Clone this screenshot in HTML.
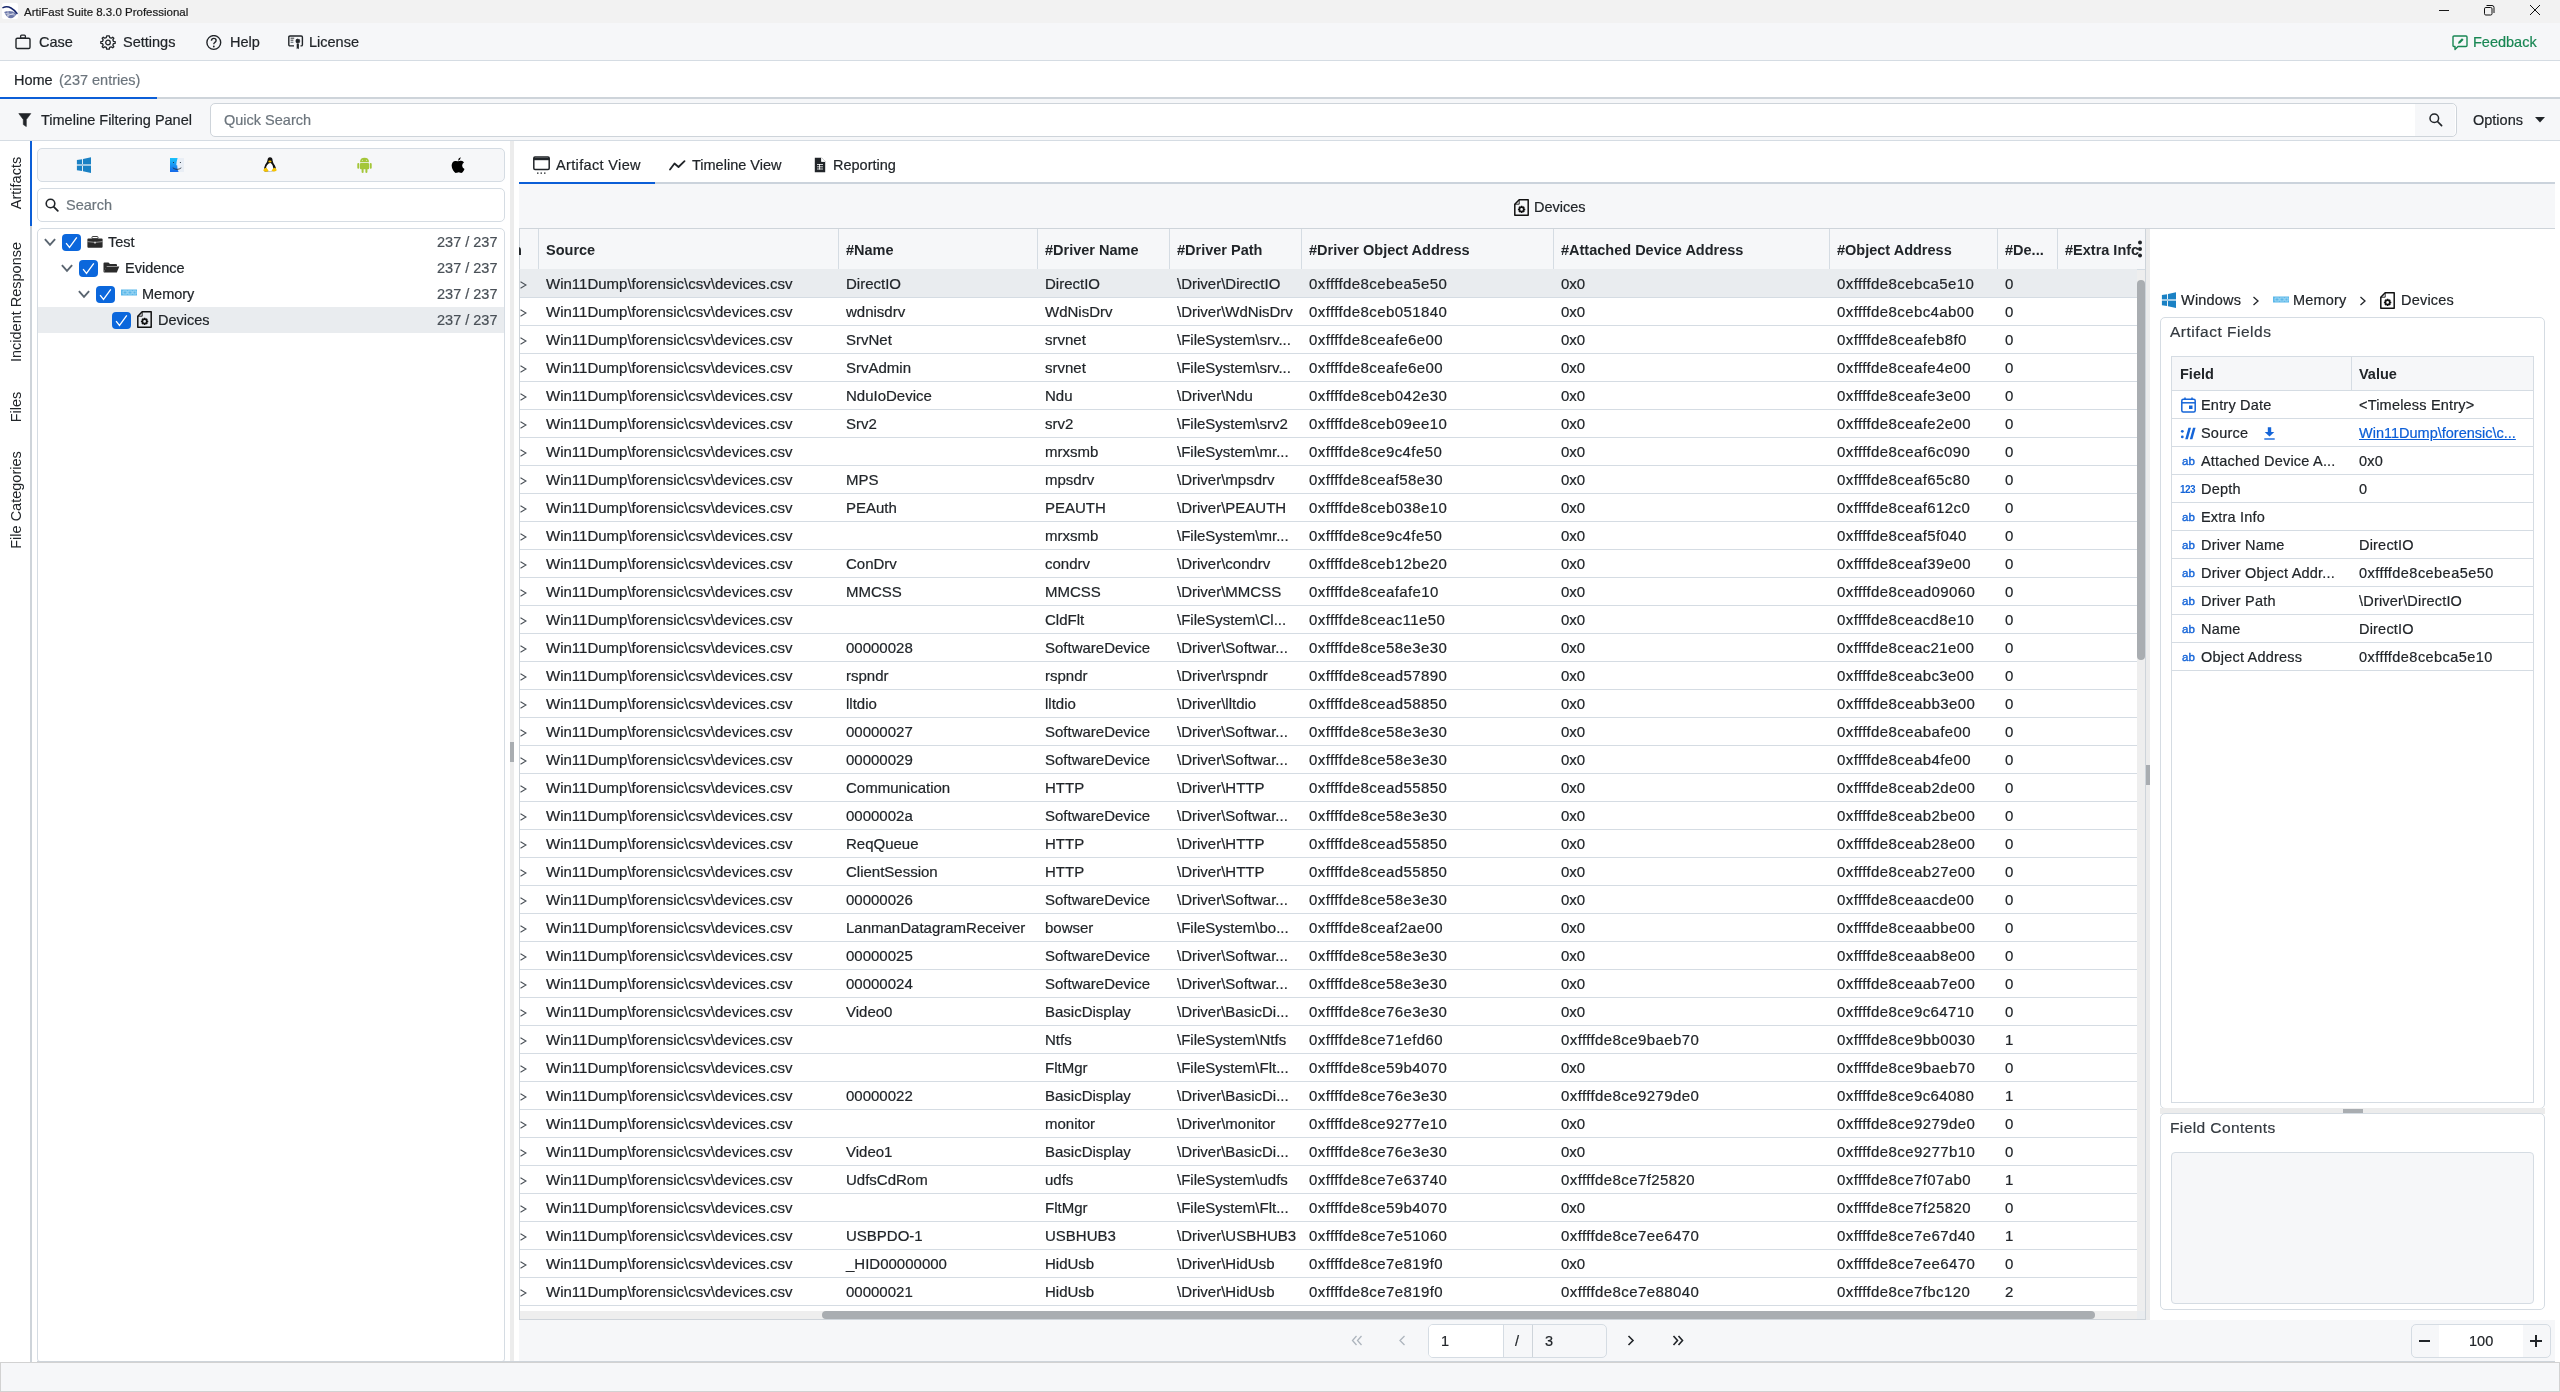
<!DOCTYPE html><html><head><meta charset="utf-8"><title>ArtiFast</title><style>
*{margin:0;padding:0}
html,body{width:2560px;height:1392px;overflow:hidden;background:#fff;font-family:"Liberation Sans",sans-serif;color:#212529}
#root{position:absolute;left:0;top:0;width:2560px;height:1392px;will-change:transform}
.r{position:absolute;display:block}
.t{position:absolute;white-space:pre;line-height:20px;-webkit-text-stroke:0.2px currentColor}
.clip{position:absolute;overflow:hidden}
.vt{position:absolute;white-space:pre;font-size:14.5px;line-height:20px;color:#212529;transform:translate(-50%,-50%) rotate(-90deg)}
</style></head><body><div id="root"><div class="r" style="left:0px;top:0px;width:2560px;height:23px;background:#f2f2f2"></div><svg class="r" style="left:2px;top:3px;" width="16" height="16" viewBox="0 0 16 16"><rect x="0" y="0" width="16" height="16" rx="2" fill="#fff"/><path d="M1 4.6 Q5 2.8 9 5 Q12.5 7 15 10.5" fill="none" stroke="#14246a" stroke-width="1.5" stroke-linecap="round"/><path d="M2.2 9 Q8 6.5 15 10.5 Q12 15 9 15.3 Q5 15.5 2.2 9 Z" fill="#3a4a8c" opacity="0.75"/><path d="M3.5 10.5 L13 12 M5 13 L12 10 M6 8 V14" stroke="#fff" stroke-width="0.7" opacity="0.8"/></svg><span class="t" style="left:24px;top:2.02px;font-size:11.5px;font-weight:400;color:#1a1a1a;">ArtiFast Suite 8.3.0 Professional</span><div class="r" style="left:2439px;top:10px;width:10px;height:1px;background:#1a1a1a"></div><svg class="r" style="left:2483px;top:4px;" width="12" height="12" viewBox="0 0 12 12"><rect x="1.5" y="3.5" width="7.5" height="7.5" rx="1.3" fill="none" stroke="#111" stroke-width="1"/><path d="M3.5 1.5 H9 Q11 1.5 11 3.5 V9" fill="none" stroke="#111" stroke-width="1"/></svg><svg class="r" style="left:2529px;top:4px;" width="12" height="12" viewBox="0 0 12 12"><path d="M1 1 L11 11 M11 1 L1 11" stroke="#111" stroke-width="1"/></svg><div class="r" style="left:0px;top:23px;width:2560px;height:37px;background:#f6f7f9"></div><div class="r" style="left:0px;top:60px;width:2560px;height:1px;background:#d5dce3"></div><svg class="r" style="left:15px;top:34px;" width="16" height="16" viewBox="0 0 16 16"><rect x="1" y="4.2" width="14" height="10.3" rx="1.3" fill="none" stroke="#212529" stroke-width="1.4"/><rect x="5.6" y="1.2" width="4.8" height="3" rx="1" fill="none" stroke="#212529" stroke-width="1.3"/></svg><span class="t" style="left:39px;top:31.98px;font-size:14.5px;font-weight:400;color:#212529;">Case</span><svg class="r" style="left:100px;top:35px;" width="16" height="15" viewBox="0 0 16 15"><path d="M8 0.8 L9.3 0.8 L9.7 2.6 L11.2 3.2 L12.7 2.2 L13.8 3.3 L12.8 4.8 L13.4 6.3 L15.2 6.7 L15.2 8.3 L13.4 8.7 L12.8 10.2 L13.8 11.7 L12.7 12.8 L11.2 11.8 L9.7 12.4 L9.3 14.2 L6.7 14.2 L6.3 12.4 L4.8 11.8 L3.3 12.8 L2.2 11.7 L3.2 10.2 L2.6 8.7 L0.8 8.3 L0.8 6.7 L2.6 6.3 L3.2 4.8 L2.2 3.3 L3.3 2.2 L4.8 3.2 L6.3 2.6 L6.7 0.8 Z" fill="none" stroke="#212529" stroke-width="1.3" stroke-linejoin="round"/><circle cx="8" cy="7.5" r="2.3" fill="none" stroke="#212529" stroke-width="1.3"/></svg><span class="t" style="left:123px;top:31.98px;font-size:14.5px;font-weight:400;color:#212529;">Settings</span><svg class="r" style="left:206px;top:35px;" width="16" height="16" viewBox="0 0 16 16"><circle cx="7.8" cy="7.5" r="6.9" fill="none" stroke="#212529" stroke-width="1.4"/><path d="M5.4 5.8 Q5.5 3.4 7.8 3.4 Q10.1 3.4 10.1 5.5 Q10.1 6.8 8.7 7.5 Q7.8 8 7.8 9.3" fill="none" stroke="#212529" stroke-width="1.4"/><circle cx="7.8" cy="11.5" r="0.9" fill="#212529"/></svg><span class="t" style="left:230px;top:31.98px;font-size:14.5px;font-weight:400;color:#212529;">Help</span><svg class="r" style="left:288px;top:35px;" width="16" height="16" viewBox="0 0 16 16"><path d="M6 10.9 H2 Q0.8 10.9 0.8 9.7 V2.2 Q0.8 1 2 1 H13.2 Q14.4 1 14.4 2.2 V9.7 Q14.4 10.9 13.2 10.9 H12.5" fill="none" stroke="#212529" stroke-width="1.4"/><path d="M2.6 3.2 H6.2 M2.6 5.2 H5.4" stroke="#212529" stroke-width="0.9"/><path d="M2.6 7.3 H5.4" stroke="#6c757d" stroke-width="1.2"/><path d="M9.8 3.2 L10.5 4.2 L11.7 4.1 L11.6 5.3 L12.5 6 L11.6 6.7 L11.7 7.9 L10.5 7.8 L9.8 8.8 L9.1 7.8 L7.9 7.9 L8 6.7 L7.1 6 L8 5.3 L7.9 4.1 L9.1 4.2 Z" fill="#212529"/><path d="M8.7 8.6 V14.2 L9.8 13.2 L10.9 14.2 V8.6" fill="#212529"/></svg><span class="t" style="left:309px;top:31.98px;font-size:14.5px;font-weight:400;color:#212529;">License</span><svg class="r" style="left:2452px;top:35px;" width="16" height="16" viewBox="0 0 16 16"><path d="M2 1 H14 Q15 1 15 2 V10.5 Q15 11.5 14 11.5 H6 L3 14.5 V11.5 H2 Q1 11.5 1 10.5 V2 Q1 1 2 1 Z" fill="none" stroke="#198754" stroke-width="1.4" stroke-linejoin="round"/><path d="M6 8.7 L6.5 6.7 L10 3.2 L11.6 4.8 L8.1 8.3 Z" fill="#198754"/></svg><span class="t" style="left:2473px;top:31.98px;font-size:14.5px;font-weight:400;color:#198754;">Feedback</span><div class="r" style="left:0px;top:61px;width:2560px;height:36px;background:#fff"></div><span class="t" style="left:14px;top:69.98px;font-size:14.5px;font-weight:400;color:#212529;">Home</span><span class="t" style="left:59px;top:69.98px;font-size:14.5px;font-weight:400;color:#6c757d;">(237 entries)</span><div class="r" style="left:0px;top:97px;width:2560px;height:2px;background:#ced4da"></div><div class="r" style="left:0px;top:97px;width:157px;height:2px;background:#0b5ed7"></div><div class="r" style="left:0px;top:99px;width:2560px;height:41px;background:#f6f7f9"></div><div class="r" style="left:0px;top:140px;width:2560px;height:1px;background:#d5dce3"></div><svg class="r" style="left:18px;top:113px;" width="14" height="14" viewBox="0 0 14 14"><path d="M0.8 0.6 H12.8 L8.3 6.6 V13.6 L5.3 11.6 V6.6 Z" fill="#212529" stroke="#212529" stroke-width="0.6" stroke-linejoin="round"/></svg><span class="t" style="left:41px;top:109.98px;font-size:14.5px;font-weight:400;color:#212529;">Timeline Filtering Panel</span><div class="r" style="left:210px;top:103px;width:2247px;height:34px;background:#fff;border:1px solid #ced4da;border-radius:5px;box-sizing:border-box"></div><div class="r" style="left:2415px;top:104px;width:40px;height:32px;background:#f6f7f9;border-radius:0 4px 4px 0"></div><svg class="r" style="left:2429px;top:113px;" width="14" height="14" viewBox="0 0 14 14"><circle cx="5.3" cy="5.3" r="4.3" fill="none" stroke="#212529" stroke-width="1.5"/><path d="M8.5 8.5 L12.6 12.6" stroke="#212529" stroke-width="1.7" stroke-linecap="round"/></svg><span class="t" style="left:224px;top:109.98px;font-size:14.5px;font-weight:400;color:#6c757d;">Quick Search</span><span class="t" style="left:2473px;top:109.98px;font-size:14.5px;font-weight:400;color:#212529;">Options</span><svg class="r" style="left:2535px;top:117px;" width="10" height="6" viewBox="0 0 10 6"><path d="M0 0 H10 L5 5.5 Z" fill="#212529"/></svg><div class="r" style="left:0px;top:141px;width:30px;height:1220px;background:#fff"></div><div class="r" style="left:30px;top:141px;width:2px;height:1221px;background:#ced4da"></div><div class="r" style="left:30px;top:141px;width:2px;height:85px;background:#0b5ed7"></div><div class="vt" style="left:16px;top:183.1px">Artifacts</div><div class="vt" style="left:16px;top:301.65px">Incident Response</div><div class="vt" style="left:16px;top:406.5px">Files</div><div class="vt" style="left:16px;top:500.0px">File Categories</div><div class="r" style="left:32px;top:141px;width:478px;height:1220px;background:#fff"></div><div class="r" style="left:37px;top:148px;width:468px;height:34px;background:#f6f7f9;border:1px solid #d5dce3;border-radius:5px;box-sizing:border-box"></div><svg class="r" style="left:76px;top:157px;" width="16" height="16" viewBox="0 0 16 16"><path d="M0.9 3.1 L6.1 2.3 V7.1 H0.9 Z M7 2.1 L15 0.2 V7.1 H7 Z M0.9 8.9 H6.1 V14 L0.9 13.2 Z M7 8.9 H15 V15.9 L7 14.2 Z" fill="#1a81c4"/><rect x="0.9" y="7.1" width="14.1" height="1.8" fill="#1a81c4" opacity="0.45"/></svg><svg class="r" style="left:170px;top:158px;" width="14" height="14" viewBox="0 0 14 14"><defs><linearGradient id="fg" x1="0" y1="0" x2="0" y2="1"><stop offset="0" stop-color="#19c3fb"/><stop offset="1" stop-color="#1668e8"/></linearGradient></defs><rect x="0" y="0" width="14" height="14" fill="#e9eef5"/><path d="M0 0 H7.6 Q6.4 4 6.3 7.2 H7.2 Q7 10.5 8.6 14 H0 Z" fill="url(#fg)"/><path d="M2.8 9.8 Q7 13 11.3 9.8" fill="none" stroke="#1d2a3a" stroke-width="0.8"/><path d="M3.5 4 V5 M10.4 4 V5" stroke="#1d2a3a" stroke-width="0.9"/></svg><svg class="r" style="left:263px;top:157px;" width="14" height="16" viewBox="0 0 14 16"><path d="M7 0.3 Q9.5 0.4 9.6 3.4 Q9.8 5.6 11.9 8.4 Q13.6 11 12.8 14 L1.6 14.4 Q0.3 11 2.3 7.6 Q4.3 5.2 4.5 3.2 Q4.7 0.4 7 0.3 Z" fill="#111"/><path d="M4.2 8 Q6 5.6 8 6.2 Q9.8 7.5 10.2 10.5 Q10.4 13.6 8 14.2 L5 14.2 Q3 13.4 3.1 11 Q3.2 9.2 4.2 8 Z" fill="#fff"/><ellipse cx="6.9" cy="4.5" rx="1.6" ry="1" fill="#f4bd00"/><path d="M0.2 13.4 Q1.2 10.2 3.6 11 L5.6 13.8 Q3 15.8 0.2 13.4 Z M13.8 13.2 Q12.8 10.2 10.5 11 L8.6 13.8 Q11.2 15.6 13.8 13.2 Z" fill="#f7c400"/></svg><svg class="r" style="left:357px;top:157px;" width="15" height="16" viewBox="0 0 15 16"><path d="M3 5.2 Q3 0.8 7.5 0.8 Q12 0.8 12 5.2 Z" fill="#a4c639"/><rect x="3" y="6" width="9" height="6.2" rx="0.8" fill="#a4c639"/><rect x="0.3" y="6" width="2" height="5.8" rx="1" fill="#a4c639"/><rect x="12.7" y="6" width="2" height="5.8" rx="1" fill="#a4c639"/><rect x="4.6" y="11" width="2" height="5" rx="1" fill="#a4c639"/><rect x="8.4" y="11" width="2" height="5" rx="1" fill="#a4c639"/><circle cx="5.4" cy="3.2" r="0.55" fill="#e8f0d0"/><circle cx="9.6" cy="3.2" r="0.55" fill="#e8f0d0"/></svg><svg class="r" style="left:451px;top:157px;" width="14" height="16" viewBox="0 0 14 16"><path d="M7 4.3 Q8.5 3.6 10.2 3.8 Q12 4 13 5.5 Q11 6.8 11.2 9 Q11.4 11.2 13.5 12 Q12.8 14 11.6 15.2 Q10.6 16.2 9.5 15.8 Q8.2 15.2 7 15.4 Q5.6 15.8 4.6 16 Q3.4 15.6 2.2 13.6 Q0.2 10 0.8 7.5 Q1.5 4.4 4.2 4.1 Q5.5 4 7 4.3 Z M7.1 3.7 Q7 1.3 9.6 0.3 Q9.9 2.9 7.1 3.7 Z" fill="#000"/></svg><div class="r" style="left:37px;top:188px;width:468px;height:34px;background:#fff;border:1px solid #d5dce3;border-radius:5px;box-sizing:border-box"></div><svg class="r" style="left:45px;top:198px;" width="14" height="14" viewBox="0 0 14 14"><circle cx="5.5" cy="5.5" r="4.3" fill="none" stroke="#212529" stroke-width="1.6"/><path d="M8.6 8.6 L12.8 12.8" stroke="#212529" stroke-width="1.8" stroke-linecap="round"/></svg><span class="t" style="left:66px;top:194.98px;font-size:14.5px;font-weight:400;color:#6c757d;">Search</span><div class="r" style="left:37px;top:228px;width:468px;height:1134px;border:1px solid #d5dce3;border-radius:5px 5px 3px 3px;box-sizing:border-box"></div><div class="r" style="left:38px;top:307px;width:466px;height:26px;background:#e9ecef"></div><svg class="r" style="left:44px;top:238px;" width="12" height="9" viewBox="0 0 12 9"><path d="M0.9 1.2 L6 6.8 L11.1 1.2" fill="none" stroke="#5a6570" stroke-width="1.9"/></svg><svg class="r" style="left:62px;top:234px;" width="19" height="17" viewBox="0 0 19 17"><rect x="0" y="0" width="19" height="17" rx="4" fill="#0b67dc"/><path d="M4.1 9.2 L7.5 13.5 L14.8 3.4" fill="none" stroke="#fff" stroke-width="1.3"/></svg><svg class="r" style="left:87px;top:236px;" width="16" height="12" viewBox="0 0 16 12"><rect x="5" y="0.5" width="6" height="2.2" rx="0.8" fill="none" stroke="#2b2b2b" stroke-width="0.9"/><rect x="0.4" y="2.4" width="15.2" height="9.3" rx="1" fill="#2b2b2b"/><path d="M0.5 5.6 Q8 7.2 15.5 5.6" fill="none" stroke="#ddd" stroke-width="0.6"/><rect x="7" y="5.8" width="2" height="1.6" fill="#ccc"/></svg><span class="t" style="left:108px;top:231.98px;font-size:14.5px;font-weight:400;color:#212529;">Test</span><span class="t" style="left:437px;top:231.98px;font-size:14.5px;font-weight:400;color:#495057;">237 / 237</span><svg class="r" style="left:61px;top:264px;" width="12" height="9" viewBox="0 0 12 9"><path d="M0.9 1.2 L6 6.8 L11.1 1.2" fill="none" stroke="#5a6570" stroke-width="1.9"/></svg><svg class="r" style="left:79px;top:260px;" width="19" height="17" viewBox="0 0 19 17"><rect x="0" y="0" width="19" height="17" rx="4" fill="#0b67dc"/><path d="M4.1 9.2 L7.5 13.5 L14.8 3.4" fill="none" stroke="#fff" stroke-width="1.3"/></svg><svg class="r" style="left:103px;top:262px;" width="17" height="11" viewBox="0 0 17 11"><path d="M0.5 10.5 V1.5 Q0.5 0.5 1.5 0.5 H5.5 L7 2 H13 Q14 2 14 3 V4 H4 Z" fill="#2b2b2b"/><path d="M3.2 4.5 H16.3 L13.8 10.5 H0.8 Z" fill="#2b2b2b"/></svg><span class="t" style="left:125px;top:257.98px;font-size:14.5px;font-weight:400;color:#212529;">Evidence</span><span class="t" style="left:437px;top:257.98px;font-size:14.5px;font-weight:400;color:#495057;">237 / 237</span><svg class="r" style="left:78px;top:290px;" width="12" height="9" viewBox="0 0 12 9"><path d="M0.9 1.2 L6 6.8 L11.1 1.2" fill="none" stroke="#5a6570" stroke-width="1.9"/></svg><svg class="r" style="left:96px;top:286px;" width="19" height="17" viewBox="0 0 19 17"><rect x="0" y="0" width="19" height="17" rx="4" fill="#0b67dc"/><path d="M4.1 9.2 L7.5 13.5 L14.8 3.4" fill="none" stroke="#fff" stroke-width="1.3"/></svg><svg class="r" style="left:121px;top:289px;" width="16" height="7" viewBox="0 0 16 7"><rect x="0" y="0.5" width="16" height="6" fill="#5bb8ea"/><path d="M2 2 H6 V5 H2 Z M7 2 H11 V5 H7 Z M12 2 H15 V5 H12 Z" fill="none" stroke="#c8e8f8" stroke-width="0.6"/></svg><span class="t" style="left:142px;top:283.98px;font-size:14.5px;font-weight:400;color:#212529;">Memory</span><span class="t" style="left:437px;top:283.98px;font-size:14.5px;font-weight:400;color:#495057;">237 / 237</span><svg class="r" style="left:112px;top:312px;" width="19" height="17" viewBox="0 0 19 17"><rect x="0" y="0" width="19" height="17" rx="4" fill="#0b67dc"/><path d="M4.1 9.2 L7.5 13.5 L14.8 3.4" fill="none" stroke="#fff" stroke-width="1.3"/></svg><svg class="r" style="left:137px;top:311px;" width="15" height="17" viewBox="0 0 15 17"><path d="M5.2 0.8 H14.2 V16.2 H0.8 V5.2 Z" fill="none" stroke="#111" stroke-width="1.5" stroke-linejoin="round"/><path d="M5.2 0.8 V5.2 H0.8" fill="none" stroke="#111" stroke-width="0.9"/><circle cx="7.6" cy="10.4" r="2.2" fill="none" stroke="#111" stroke-width="1.7"/><path d="M10.00 10.40 L11.30 10.40 M9.30 12.10 L10.22 13.02 M7.60 12.80 L7.60 14.10 M5.90 12.10 L4.98 13.02 M5.20 10.40 L3.90 10.40 M5.90 8.70 L4.98 7.78 M7.60 8.00 L7.60 6.70 M9.30 8.70 L10.22 7.78" stroke="#111" stroke-width="1.5"/></svg><span class="t" style="left:158px;top:309.98px;font-size:14.5px;font-weight:400;color:#212529;">Devices</span><span class="t" style="left:437px;top:309.98px;font-size:14.5px;font-weight:400;color:#495057;">237 / 237</span><div class="r" style="left:510px;top:141px;width:4px;height:1221px;background:#ececec"></div><div class="r" style="left:510px;top:742px;width:4px;height:20px;background:#a9adb1"></div><div class="r" style="left:514px;top:141px;width:2046px;height:1179px;background:#fff"></div><div class="r" style="left:519px;top:182px;width:2036px;height:2px;background:#cbd3dc"></div><div class="r" style="left:519px;top:182px;width:136px;height:2px;background:#0b5ed7"></div><svg class="r" style="left:533px;top:156px;" width="17" height="18" viewBox="0 0 17 18"><rect x="0.8" y="1" width="15.4" height="12.5" rx="1.2" fill="none" stroke="#212529" stroke-width="1.5"/><path d="M0.8 3 H16.2" stroke="#212529" stroke-width="2.4"/><path d="M4 17.2 H5.5 M7.5 17.2 H9 M11 17.2 H12.5" stroke="#212529" stroke-width="1.3"/></svg><span class="t" style="left:556px;top:154.98px;font-size:14.5px;font-weight:400;color:#212529;letter-spacing:0.35px">Artifact View</span><svg class="r" style="left:669px;top:160px;" width="17" height="11" viewBox="0 0 17 11"><path d="M1 9.5 L5.5 3.5 L9.5 7 L15.5 1.2" fill="none" stroke="#212529" stroke-width="1.8" stroke-linejoin="round" stroke-linecap="round"/></svg><span class="t" style="left:692px;top:154.98px;font-size:14.5px;font-weight:400;color:#212529;">Timeline View</span><svg class="r" style="left:814px;top:157px;" width="12" height="16" viewBox="0 0 12 16"><path d="M0.8 0.8 H7.5 L11.2 4.5 V15.2 H0.8 Z" fill="#212529"/><path d="M7.5 0.8 V4.5 H11.2" fill="#fff" stroke="#fff" stroke-width="0.8"/><path d="M3 7.5 H9 M3 9.8 H9 M3 12 H9 M5.5 7 V12.5" stroke="#fff" stroke-width="0.8"/></svg><span class="t" style="left:833px;top:154.98px;font-size:14.5px;font-weight:400;color:#212529;">Reporting</span><div class="r" style="left:519px;top:184px;width:2036px;height:44px;background:#f6f7f9"></div><div class="r" style="left:519px;top:228px;width:2036px;height:1px;background:#ced4da"></div><svg class="r" style="left:1514px;top:199px;" width="15" height="17" viewBox="0 0 15 17"><path d="M5.2 0.8 H14.2 V16.2 H0.8 V5.2 Z" fill="none" stroke="#111" stroke-width="1.5" stroke-linejoin="round"/><path d="M5.2 0.8 V5.2 H0.8" fill="none" stroke="#111" stroke-width="0.9"/><circle cx="7.6" cy="10.4" r="2.2" fill="none" stroke="#111" stroke-width="1.7"/><path d="M10.00 10.40 L11.30 10.40 M9.30 12.10 L10.22 13.02 M7.60 12.80 L7.60 14.10 M5.90 12.10 L4.98 13.02 M5.20 10.40 L3.90 10.40 M5.90 8.70 L4.98 7.78 M7.60 8.00 L7.60 6.70 M9.30 8.70 L10.22 7.78" stroke="#111" stroke-width="1.5"/></svg><span class="t" style="left:1534px;top:196.98px;font-size:14.5px;font-weight:400;color:#212529;">Devices</span><div class="r" style="left:519px;top:229px;width:1626px;height:1091px;background:#fff"></div><div class="r" style="left:519px;top:229px;width:1626px;height:40px;background:#f6f7f9"></div><div class="r" style="left:519px;top:228px;width:1px;height:1092px;background:#ced4da"></div><div class="r" style="left:2145px;top:228px;width:1px;height:1092px;background:#ced4da"></div><div class="r" style="left:519px;top:269px;width:1626px;height:1px;background:#d5dce3"></div><div class="r" style="left:538px;top:229px;width:1px;height:40px;background:#d5dce3"></div><div class="r" style="left:838px;top:229px;width:1px;height:40px;background:#d5dce3"></div><div class="r" style="left:1037px;top:229px;width:1px;height:40px;background:#d5dce3"></div><div class="r" style="left:1169px;top:229px;width:1px;height:40px;background:#d5dce3"></div><div class="r" style="left:1301px;top:229px;width:1px;height:40px;background:#d5dce3"></div><div class="r" style="left:1553px;top:229px;width:1px;height:40px;background:#d5dce3"></div><div class="r" style="left:1829px;top:229px;width:1px;height:40px;background:#d5dce3"></div><div class="r" style="left:1997px;top:229px;width:1px;height:40px;background:#d5dce3"></div><div class="r" style="left:2057px;top:229px;width:1px;height:40px;background:#d5dce3"></div><div class="clip" style="left:519px;top:229px;width:19px;height:40px"><span class="t" style="left:-6px;top:10.98px;font-size:14.5px;font-weight:700;color:#212529;-webkit-text-stroke:0;">n</span></div><span class="t" style="left:546px;top:239.98px;font-size:14.5px;font-weight:700;color:#212529;-webkit-text-stroke:0;">Source</span><span class="t" style="left:846px;top:239.98px;font-size:14.5px;font-weight:700;color:#212529;-webkit-text-stroke:0;">#Name</span><span class="t" style="left:1045px;top:239.98px;font-size:14.5px;font-weight:700;color:#212529;-webkit-text-stroke:0;">#Driver Name</span><span class="t" style="left:1177px;top:239.98px;font-size:14.5px;font-weight:700;color:#212529;-webkit-text-stroke:0;">#Driver Path</span><span class="t" style="left:1309px;top:239.98px;font-size:14.5px;font-weight:700;color:#212529;-webkit-text-stroke:0;">#Driver Object Address</span><span class="t" style="left:1561px;top:239.98px;font-size:14.5px;font-weight:700;color:#212529;-webkit-text-stroke:0;">#Attached Device Address</span><span class="t" style="left:1837px;top:239.98px;font-size:14.5px;font-weight:700;color:#212529;-webkit-text-stroke:0;">#Object Address</span><span class="t" style="left:2005px;top:239.98px;font-size:14.5px;font-weight:700;color:#212529;-webkit-text-stroke:0;">#De...</span><span class="t" style="left:2065px;top:239.98px;font-size:14.5px;font-weight:700;color:#212529;-webkit-text-stroke:0;">#Extra Infc</span><svg class="r" style="left:2137px;top:240px;" width="6" height="18" viewBox="0 0 6 18"><circle cx="3" cy="2.5" r="2" fill="#212529"/><circle cx="3" cy="9" r="2" fill="#212529"/><circle cx="3" cy="15.5" r="2" fill="#212529"/></svg><div class="r" style="left:520px;top:269px;width:1617px;height:28px;background:#e9ecef"></div><div class="r" style="left:520px;top:297px;width:1617px;height:1px;background:#d5dce3"></div><svg class="r" style="left:520px;top:281px;" width="7" height="8" viewBox="0 0 7 8"><path d="M0.5 0.8 L6 4 L0.5 7.2" fill="none" stroke="#495057" stroke-width="1.1"/></svg><span class="t" style="left:546px;top:273.80px;font-size:15px;font-weight:400;color:#212529;">Win11Dump\forensic\csv\devices.csv</span><span class="t" style="left:846px;top:273.80px;font-size:15px;font-weight:400;color:#212529;">DirectIO</span><span class="t" style="left:1045px;top:273.80px;font-size:15px;font-weight:400;color:#212529;">DirectIO</span><span class="t" style="left:1177px;top:273.80px;font-size:15px;font-weight:400;color:#212529;">\Driver\DirectIO</span><span class="t" style="left:1309px;top:273.80px;font-size:15px;font-weight:400;color:#212529;letter-spacing:0.4px">0xffffde8cebea5e50</span><span class="t" style="left:1561px;top:273.80px;font-size:15px;font-weight:400;color:#212529;">0x0</span><span class="t" style="left:1837px;top:273.80px;font-size:15px;font-weight:400;color:#212529;letter-spacing:0.4px">0xffffde8cebca5e10</span><span class="t" style="left:2005px;top:273.80px;font-size:15px;font-weight:400;color:#212529;">0</span><div class="r" style="left:520px;top:325px;width:1617px;height:1px;background:#d5dce3"></div><svg class="r" style="left:520px;top:309px;" width="7" height="8" viewBox="0 0 7 8"><path d="M0.5 0.8 L6 4 L0.5 7.2" fill="none" stroke="#495057" stroke-width="1.1"/></svg><span class="t" style="left:546px;top:301.80px;font-size:15px;font-weight:400;color:#212529;">Win11Dump\forensic\csv\devices.csv</span><span class="t" style="left:846px;top:301.80px;font-size:15px;font-weight:400;color:#212529;">wdnisdrv</span><span class="t" style="left:1045px;top:301.80px;font-size:15px;font-weight:400;color:#212529;">WdNisDrv</span><span class="t" style="left:1177px;top:301.80px;font-size:15px;font-weight:400;color:#212529;">\Driver\WdNisDrv</span><span class="t" style="left:1309px;top:301.80px;font-size:15px;font-weight:400;color:#212529;letter-spacing:0.4px">0xffffde8ceb051840</span><span class="t" style="left:1561px;top:301.80px;font-size:15px;font-weight:400;color:#212529;">0x0</span><span class="t" style="left:1837px;top:301.80px;font-size:15px;font-weight:400;color:#212529;letter-spacing:0.4px">0xffffde8cebc4ab00</span><span class="t" style="left:2005px;top:301.80px;font-size:15px;font-weight:400;color:#212529;">0</span><div class="r" style="left:520px;top:353px;width:1617px;height:1px;background:#d5dce3"></div><svg class="r" style="left:520px;top:337px;" width="7" height="8" viewBox="0 0 7 8"><path d="M0.5 0.8 L6 4 L0.5 7.2" fill="none" stroke="#495057" stroke-width="1.1"/></svg><span class="t" style="left:546px;top:329.80px;font-size:15px;font-weight:400;color:#212529;">Win11Dump\forensic\csv\devices.csv</span><span class="t" style="left:846px;top:329.80px;font-size:15px;font-weight:400;color:#212529;">SrvNet</span><span class="t" style="left:1045px;top:329.80px;font-size:15px;font-weight:400;color:#212529;">srvnet</span><span class="t" style="left:1177px;top:329.80px;font-size:15px;font-weight:400;color:#212529;">\FileSystem\srv...</span><span class="t" style="left:1309px;top:329.80px;font-size:15px;font-weight:400;color:#212529;letter-spacing:0.4px">0xffffde8ceafe6e00</span><span class="t" style="left:1561px;top:329.80px;font-size:15px;font-weight:400;color:#212529;">0x0</span><span class="t" style="left:1837px;top:329.80px;font-size:15px;font-weight:400;color:#212529;letter-spacing:0.4px">0xffffde8ceafeb8f0</span><span class="t" style="left:2005px;top:329.80px;font-size:15px;font-weight:400;color:#212529;">0</span><div class="r" style="left:520px;top:381px;width:1617px;height:1px;background:#d5dce3"></div><svg class="r" style="left:520px;top:365px;" width="7" height="8" viewBox="0 0 7 8"><path d="M0.5 0.8 L6 4 L0.5 7.2" fill="none" stroke="#495057" stroke-width="1.1"/></svg><span class="t" style="left:546px;top:357.80px;font-size:15px;font-weight:400;color:#212529;">Win11Dump\forensic\csv\devices.csv</span><span class="t" style="left:846px;top:357.80px;font-size:15px;font-weight:400;color:#212529;">SrvAdmin</span><span class="t" style="left:1045px;top:357.80px;font-size:15px;font-weight:400;color:#212529;">srvnet</span><span class="t" style="left:1177px;top:357.80px;font-size:15px;font-weight:400;color:#212529;">\FileSystem\srv...</span><span class="t" style="left:1309px;top:357.80px;font-size:15px;font-weight:400;color:#212529;letter-spacing:0.4px">0xffffde8ceafe6e00</span><span class="t" style="left:1561px;top:357.80px;font-size:15px;font-weight:400;color:#212529;">0x0</span><span class="t" style="left:1837px;top:357.80px;font-size:15px;font-weight:400;color:#212529;letter-spacing:0.4px">0xffffde8ceafe4e00</span><span class="t" style="left:2005px;top:357.80px;font-size:15px;font-weight:400;color:#212529;">0</span><div class="r" style="left:520px;top:409px;width:1617px;height:1px;background:#d5dce3"></div><svg class="r" style="left:520px;top:393px;" width="7" height="8" viewBox="0 0 7 8"><path d="M0.5 0.8 L6 4 L0.5 7.2" fill="none" stroke="#495057" stroke-width="1.1"/></svg><span class="t" style="left:546px;top:385.80px;font-size:15px;font-weight:400;color:#212529;">Win11Dump\forensic\csv\devices.csv</span><span class="t" style="left:846px;top:385.80px;font-size:15px;font-weight:400;color:#212529;">NduIoDevice</span><span class="t" style="left:1045px;top:385.80px;font-size:15px;font-weight:400;color:#212529;">Ndu</span><span class="t" style="left:1177px;top:385.80px;font-size:15px;font-weight:400;color:#212529;">\Driver\Ndu</span><span class="t" style="left:1309px;top:385.80px;font-size:15px;font-weight:400;color:#212529;letter-spacing:0.4px">0xffffde8ceb042e30</span><span class="t" style="left:1561px;top:385.80px;font-size:15px;font-weight:400;color:#212529;">0x0</span><span class="t" style="left:1837px;top:385.80px;font-size:15px;font-weight:400;color:#212529;letter-spacing:0.4px">0xffffde8ceafe3e00</span><span class="t" style="left:2005px;top:385.80px;font-size:15px;font-weight:400;color:#212529;">0</span><div class="r" style="left:520px;top:437px;width:1617px;height:1px;background:#d5dce3"></div><svg class="r" style="left:520px;top:421px;" width="7" height="8" viewBox="0 0 7 8"><path d="M0.5 0.8 L6 4 L0.5 7.2" fill="none" stroke="#495057" stroke-width="1.1"/></svg><span class="t" style="left:546px;top:413.80px;font-size:15px;font-weight:400;color:#212529;">Win11Dump\forensic\csv\devices.csv</span><span class="t" style="left:846px;top:413.80px;font-size:15px;font-weight:400;color:#212529;">Srv2</span><span class="t" style="left:1045px;top:413.80px;font-size:15px;font-weight:400;color:#212529;">srv2</span><span class="t" style="left:1177px;top:413.80px;font-size:15px;font-weight:400;color:#212529;">\FileSystem\srv2</span><span class="t" style="left:1309px;top:413.80px;font-size:15px;font-weight:400;color:#212529;letter-spacing:0.4px">0xffffde8ceb09ee10</span><span class="t" style="left:1561px;top:413.80px;font-size:15px;font-weight:400;color:#212529;">0x0</span><span class="t" style="left:1837px;top:413.80px;font-size:15px;font-weight:400;color:#212529;letter-spacing:0.4px">0xffffde8ceafe2e00</span><span class="t" style="left:2005px;top:413.80px;font-size:15px;font-weight:400;color:#212529;">0</span><div class="r" style="left:520px;top:465px;width:1617px;height:1px;background:#d5dce3"></div><svg class="r" style="left:520px;top:449px;" width="7" height="8" viewBox="0 0 7 8"><path d="M0.5 0.8 L6 4 L0.5 7.2" fill="none" stroke="#495057" stroke-width="1.1"/></svg><span class="t" style="left:546px;top:441.80px;font-size:15px;font-weight:400;color:#212529;">Win11Dump\forensic\csv\devices.csv</span><span class="t" style="left:1045px;top:441.80px;font-size:15px;font-weight:400;color:#212529;">mrxsmb</span><span class="t" style="left:1177px;top:441.80px;font-size:15px;font-weight:400;color:#212529;">\FileSystem\mr...</span><span class="t" style="left:1309px;top:441.80px;font-size:15px;font-weight:400;color:#212529;letter-spacing:0.4px">0xffffde8ce9c4fe50</span><span class="t" style="left:1561px;top:441.80px;font-size:15px;font-weight:400;color:#212529;">0x0</span><span class="t" style="left:1837px;top:441.80px;font-size:15px;font-weight:400;color:#212529;letter-spacing:0.4px">0xffffde8ceaf6c090</span><span class="t" style="left:2005px;top:441.80px;font-size:15px;font-weight:400;color:#212529;">0</span><div class="r" style="left:520px;top:493px;width:1617px;height:1px;background:#d5dce3"></div><svg class="r" style="left:520px;top:477px;" width="7" height="8" viewBox="0 0 7 8"><path d="M0.5 0.8 L6 4 L0.5 7.2" fill="none" stroke="#495057" stroke-width="1.1"/></svg><span class="t" style="left:546px;top:469.80px;font-size:15px;font-weight:400;color:#212529;">Win11Dump\forensic\csv\devices.csv</span><span class="t" style="left:846px;top:469.80px;font-size:15px;font-weight:400;color:#212529;">MPS</span><span class="t" style="left:1045px;top:469.80px;font-size:15px;font-weight:400;color:#212529;">mpsdrv</span><span class="t" style="left:1177px;top:469.80px;font-size:15px;font-weight:400;color:#212529;">\Driver\mpsdrv</span><span class="t" style="left:1309px;top:469.80px;font-size:15px;font-weight:400;color:#212529;letter-spacing:0.4px">0xffffde8ceaf58e30</span><span class="t" style="left:1561px;top:469.80px;font-size:15px;font-weight:400;color:#212529;">0x0</span><span class="t" style="left:1837px;top:469.80px;font-size:15px;font-weight:400;color:#212529;letter-spacing:0.4px">0xffffde8ceaf65c80</span><span class="t" style="left:2005px;top:469.80px;font-size:15px;font-weight:400;color:#212529;">0</span><div class="r" style="left:520px;top:521px;width:1617px;height:1px;background:#d5dce3"></div><svg class="r" style="left:520px;top:505px;" width="7" height="8" viewBox="0 0 7 8"><path d="M0.5 0.8 L6 4 L0.5 7.2" fill="none" stroke="#495057" stroke-width="1.1"/></svg><span class="t" style="left:546px;top:497.80px;font-size:15px;font-weight:400;color:#212529;">Win11Dump\forensic\csv\devices.csv</span><span class="t" style="left:846px;top:497.80px;font-size:15px;font-weight:400;color:#212529;">PEAuth</span><span class="t" style="left:1045px;top:497.80px;font-size:15px;font-weight:400;color:#212529;">PEAUTH</span><span class="t" style="left:1177px;top:497.80px;font-size:15px;font-weight:400;color:#212529;">\Driver\PEAUTH</span><span class="t" style="left:1309px;top:497.80px;font-size:15px;font-weight:400;color:#212529;letter-spacing:0.4px">0xffffde8ceb038e10</span><span class="t" style="left:1561px;top:497.80px;font-size:15px;font-weight:400;color:#212529;">0x0</span><span class="t" style="left:1837px;top:497.80px;font-size:15px;font-weight:400;color:#212529;letter-spacing:0.4px">0xffffde8ceaf612c0</span><span class="t" style="left:2005px;top:497.80px;font-size:15px;font-weight:400;color:#212529;">0</span><div class="r" style="left:520px;top:549px;width:1617px;height:1px;background:#d5dce3"></div><svg class="r" style="left:520px;top:533px;" width="7" height="8" viewBox="0 0 7 8"><path d="M0.5 0.8 L6 4 L0.5 7.2" fill="none" stroke="#495057" stroke-width="1.1"/></svg><span class="t" style="left:546px;top:525.80px;font-size:15px;font-weight:400;color:#212529;">Win11Dump\forensic\csv\devices.csv</span><span class="t" style="left:1045px;top:525.80px;font-size:15px;font-weight:400;color:#212529;">mrxsmb</span><span class="t" style="left:1177px;top:525.80px;font-size:15px;font-weight:400;color:#212529;">\FileSystem\mr...</span><span class="t" style="left:1309px;top:525.80px;font-size:15px;font-weight:400;color:#212529;letter-spacing:0.4px">0xffffde8ce9c4fe50</span><span class="t" style="left:1561px;top:525.80px;font-size:15px;font-weight:400;color:#212529;">0x0</span><span class="t" style="left:1837px;top:525.80px;font-size:15px;font-weight:400;color:#212529;letter-spacing:0.4px">0xffffde8ceaf5f040</span><span class="t" style="left:2005px;top:525.80px;font-size:15px;font-weight:400;color:#212529;">0</span><div class="r" style="left:520px;top:577px;width:1617px;height:1px;background:#d5dce3"></div><svg class="r" style="left:520px;top:561px;" width="7" height="8" viewBox="0 0 7 8"><path d="M0.5 0.8 L6 4 L0.5 7.2" fill="none" stroke="#495057" stroke-width="1.1"/></svg><span class="t" style="left:546px;top:553.80px;font-size:15px;font-weight:400;color:#212529;">Win11Dump\forensic\csv\devices.csv</span><span class="t" style="left:846px;top:553.80px;font-size:15px;font-weight:400;color:#212529;">ConDrv</span><span class="t" style="left:1045px;top:553.80px;font-size:15px;font-weight:400;color:#212529;">condrv</span><span class="t" style="left:1177px;top:553.80px;font-size:15px;font-weight:400;color:#212529;">\Driver\condrv</span><span class="t" style="left:1309px;top:553.80px;font-size:15px;font-weight:400;color:#212529;letter-spacing:0.4px">0xffffde8ceb12be20</span><span class="t" style="left:1561px;top:553.80px;font-size:15px;font-weight:400;color:#212529;">0x0</span><span class="t" style="left:1837px;top:553.80px;font-size:15px;font-weight:400;color:#212529;letter-spacing:0.4px">0xffffde8ceaf39e00</span><span class="t" style="left:2005px;top:553.80px;font-size:15px;font-weight:400;color:#212529;">0</span><div class="r" style="left:520px;top:605px;width:1617px;height:1px;background:#d5dce3"></div><svg class="r" style="left:520px;top:589px;" width="7" height="8" viewBox="0 0 7 8"><path d="M0.5 0.8 L6 4 L0.5 7.2" fill="none" stroke="#495057" stroke-width="1.1"/></svg><span class="t" style="left:546px;top:581.80px;font-size:15px;font-weight:400;color:#212529;">Win11Dump\forensic\csv\devices.csv</span><span class="t" style="left:846px;top:581.80px;font-size:15px;font-weight:400;color:#212529;">MMCSS</span><span class="t" style="left:1045px;top:581.80px;font-size:15px;font-weight:400;color:#212529;">MMCSS</span><span class="t" style="left:1177px;top:581.80px;font-size:15px;font-weight:400;color:#212529;">\Driver\MMCSS</span><span class="t" style="left:1309px;top:581.80px;font-size:15px;font-weight:400;color:#212529;letter-spacing:0.4px">0xffffde8ceafafe10</span><span class="t" style="left:1561px;top:581.80px;font-size:15px;font-weight:400;color:#212529;">0x0</span><span class="t" style="left:1837px;top:581.80px;font-size:15px;font-weight:400;color:#212529;letter-spacing:0.4px">0xffffde8cead09060</span><span class="t" style="left:2005px;top:581.80px;font-size:15px;font-weight:400;color:#212529;">0</span><div class="r" style="left:520px;top:633px;width:1617px;height:1px;background:#d5dce3"></div><svg class="r" style="left:520px;top:617px;" width="7" height="8" viewBox="0 0 7 8"><path d="M0.5 0.8 L6 4 L0.5 7.2" fill="none" stroke="#495057" stroke-width="1.1"/></svg><span class="t" style="left:546px;top:609.80px;font-size:15px;font-weight:400;color:#212529;">Win11Dump\forensic\csv\devices.csv</span><span class="t" style="left:1045px;top:609.80px;font-size:15px;font-weight:400;color:#212529;">CldFlt</span><span class="t" style="left:1177px;top:609.80px;font-size:15px;font-weight:400;color:#212529;">\FileSystem\Cl...</span><span class="t" style="left:1309px;top:609.80px;font-size:15px;font-weight:400;color:#212529;letter-spacing:0.4px">0xffffde8ceac11e50</span><span class="t" style="left:1561px;top:609.80px;font-size:15px;font-weight:400;color:#212529;">0x0</span><span class="t" style="left:1837px;top:609.80px;font-size:15px;font-weight:400;color:#212529;letter-spacing:0.4px">0xffffde8ceacd8e10</span><span class="t" style="left:2005px;top:609.80px;font-size:15px;font-weight:400;color:#212529;">0</span><div class="r" style="left:520px;top:661px;width:1617px;height:1px;background:#d5dce3"></div><svg class="r" style="left:520px;top:645px;" width="7" height="8" viewBox="0 0 7 8"><path d="M0.5 0.8 L6 4 L0.5 7.2" fill="none" stroke="#495057" stroke-width="1.1"/></svg><span class="t" style="left:546px;top:637.80px;font-size:15px;font-weight:400;color:#212529;">Win11Dump\forensic\csv\devices.csv</span><span class="t" style="left:846px;top:637.80px;font-size:15px;font-weight:400;color:#212529;">00000028</span><span class="t" style="left:1045px;top:637.80px;font-size:15px;font-weight:400;color:#212529;">SoftwareDevice</span><span class="t" style="left:1177px;top:637.80px;font-size:15px;font-weight:400;color:#212529;">\Driver\Softwar...</span><span class="t" style="left:1309px;top:637.80px;font-size:15px;font-weight:400;color:#212529;letter-spacing:0.4px">0xffffde8ce58e3e30</span><span class="t" style="left:1561px;top:637.80px;font-size:15px;font-weight:400;color:#212529;">0x0</span><span class="t" style="left:1837px;top:637.80px;font-size:15px;font-weight:400;color:#212529;letter-spacing:0.4px">0xffffde8ceac21e00</span><span class="t" style="left:2005px;top:637.80px;font-size:15px;font-weight:400;color:#212529;">0</span><div class="r" style="left:520px;top:689px;width:1617px;height:1px;background:#d5dce3"></div><svg class="r" style="left:520px;top:673px;" width="7" height="8" viewBox="0 0 7 8"><path d="M0.5 0.8 L6 4 L0.5 7.2" fill="none" stroke="#495057" stroke-width="1.1"/></svg><span class="t" style="left:546px;top:665.80px;font-size:15px;font-weight:400;color:#212529;">Win11Dump\forensic\csv\devices.csv</span><span class="t" style="left:846px;top:665.80px;font-size:15px;font-weight:400;color:#212529;">rspndr</span><span class="t" style="left:1045px;top:665.80px;font-size:15px;font-weight:400;color:#212529;">rspndr</span><span class="t" style="left:1177px;top:665.80px;font-size:15px;font-weight:400;color:#212529;">\Driver\rspndr</span><span class="t" style="left:1309px;top:665.80px;font-size:15px;font-weight:400;color:#212529;letter-spacing:0.4px">0xffffde8cead57890</span><span class="t" style="left:1561px;top:665.80px;font-size:15px;font-weight:400;color:#212529;">0x0</span><span class="t" style="left:1837px;top:665.80px;font-size:15px;font-weight:400;color:#212529;letter-spacing:0.4px">0xffffde8ceabc3e00</span><span class="t" style="left:2005px;top:665.80px;font-size:15px;font-weight:400;color:#212529;">0</span><div class="r" style="left:520px;top:717px;width:1617px;height:1px;background:#d5dce3"></div><svg class="r" style="left:520px;top:701px;" width="7" height="8" viewBox="0 0 7 8"><path d="M0.5 0.8 L6 4 L0.5 7.2" fill="none" stroke="#495057" stroke-width="1.1"/></svg><span class="t" style="left:546px;top:693.80px;font-size:15px;font-weight:400;color:#212529;">Win11Dump\forensic\csv\devices.csv</span><span class="t" style="left:846px;top:693.80px;font-size:15px;font-weight:400;color:#212529;">lltdio</span><span class="t" style="left:1045px;top:693.80px;font-size:15px;font-weight:400;color:#212529;">lltdio</span><span class="t" style="left:1177px;top:693.80px;font-size:15px;font-weight:400;color:#212529;">\Driver\lltdio</span><span class="t" style="left:1309px;top:693.80px;font-size:15px;font-weight:400;color:#212529;letter-spacing:0.4px">0xffffde8cead58850</span><span class="t" style="left:1561px;top:693.80px;font-size:15px;font-weight:400;color:#212529;">0x0</span><span class="t" style="left:1837px;top:693.80px;font-size:15px;font-weight:400;color:#212529;letter-spacing:0.4px">0xffffde8ceabb3e00</span><span class="t" style="left:2005px;top:693.80px;font-size:15px;font-weight:400;color:#212529;">0</span><div class="r" style="left:520px;top:745px;width:1617px;height:1px;background:#d5dce3"></div><svg class="r" style="left:520px;top:729px;" width="7" height="8" viewBox="0 0 7 8"><path d="M0.5 0.8 L6 4 L0.5 7.2" fill="none" stroke="#495057" stroke-width="1.1"/></svg><span class="t" style="left:546px;top:721.80px;font-size:15px;font-weight:400;color:#212529;">Win11Dump\forensic\csv\devices.csv</span><span class="t" style="left:846px;top:721.80px;font-size:15px;font-weight:400;color:#212529;">00000027</span><span class="t" style="left:1045px;top:721.80px;font-size:15px;font-weight:400;color:#212529;">SoftwareDevice</span><span class="t" style="left:1177px;top:721.80px;font-size:15px;font-weight:400;color:#212529;">\Driver\Softwar...</span><span class="t" style="left:1309px;top:721.80px;font-size:15px;font-weight:400;color:#212529;letter-spacing:0.4px">0xffffde8ce58e3e30</span><span class="t" style="left:1561px;top:721.80px;font-size:15px;font-weight:400;color:#212529;">0x0</span><span class="t" style="left:1837px;top:721.80px;font-size:15px;font-weight:400;color:#212529;letter-spacing:0.4px">0xffffde8ceabafe00</span><span class="t" style="left:2005px;top:721.80px;font-size:15px;font-weight:400;color:#212529;">0</span><div class="r" style="left:520px;top:773px;width:1617px;height:1px;background:#d5dce3"></div><svg class="r" style="left:520px;top:757px;" width="7" height="8" viewBox="0 0 7 8"><path d="M0.5 0.8 L6 4 L0.5 7.2" fill="none" stroke="#495057" stroke-width="1.1"/></svg><span class="t" style="left:546px;top:749.80px;font-size:15px;font-weight:400;color:#212529;">Win11Dump\forensic\csv\devices.csv</span><span class="t" style="left:846px;top:749.80px;font-size:15px;font-weight:400;color:#212529;">00000029</span><span class="t" style="left:1045px;top:749.80px;font-size:15px;font-weight:400;color:#212529;">SoftwareDevice</span><span class="t" style="left:1177px;top:749.80px;font-size:15px;font-weight:400;color:#212529;">\Driver\Softwar...</span><span class="t" style="left:1309px;top:749.80px;font-size:15px;font-weight:400;color:#212529;letter-spacing:0.4px">0xffffde8ce58e3e30</span><span class="t" style="left:1561px;top:749.80px;font-size:15px;font-weight:400;color:#212529;">0x0</span><span class="t" style="left:1837px;top:749.80px;font-size:15px;font-weight:400;color:#212529;letter-spacing:0.4px">0xffffde8ceab4fe00</span><span class="t" style="left:2005px;top:749.80px;font-size:15px;font-weight:400;color:#212529;">0</span><div class="r" style="left:520px;top:801px;width:1617px;height:1px;background:#d5dce3"></div><svg class="r" style="left:520px;top:785px;" width="7" height="8" viewBox="0 0 7 8"><path d="M0.5 0.8 L6 4 L0.5 7.2" fill="none" stroke="#495057" stroke-width="1.1"/></svg><span class="t" style="left:546px;top:777.80px;font-size:15px;font-weight:400;color:#212529;">Win11Dump\forensic\csv\devices.csv</span><span class="t" style="left:846px;top:777.80px;font-size:15px;font-weight:400;color:#212529;">Communication</span><span class="t" style="left:1045px;top:777.80px;font-size:15px;font-weight:400;color:#212529;">HTTP</span><span class="t" style="left:1177px;top:777.80px;font-size:15px;font-weight:400;color:#212529;">\Driver\HTTP</span><span class="t" style="left:1309px;top:777.80px;font-size:15px;font-weight:400;color:#212529;letter-spacing:0.4px">0xffffde8cead55850</span><span class="t" style="left:1561px;top:777.80px;font-size:15px;font-weight:400;color:#212529;">0x0</span><span class="t" style="left:1837px;top:777.80px;font-size:15px;font-weight:400;color:#212529;letter-spacing:0.4px">0xffffde8ceab2de00</span><span class="t" style="left:2005px;top:777.80px;font-size:15px;font-weight:400;color:#212529;">0</span><div class="r" style="left:520px;top:829px;width:1617px;height:1px;background:#d5dce3"></div><svg class="r" style="left:520px;top:813px;" width="7" height="8" viewBox="0 0 7 8"><path d="M0.5 0.8 L6 4 L0.5 7.2" fill="none" stroke="#495057" stroke-width="1.1"/></svg><span class="t" style="left:546px;top:805.80px;font-size:15px;font-weight:400;color:#212529;">Win11Dump\forensic\csv\devices.csv</span><span class="t" style="left:846px;top:805.80px;font-size:15px;font-weight:400;color:#212529;">0000002a</span><span class="t" style="left:1045px;top:805.80px;font-size:15px;font-weight:400;color:#212529;">SoftwareDevice</span><span class="t" style="left:1177px;top:805.80px;font-size:15px;font-weight:400;color:#212529;">\Driver\Softwar...</span><span class="t" style="left:1309px;top:805.80px;font-size:15px;font-weight:400;color:#212529;letter-spacing:0.4px">0xffffde8ce58e3e30</span><span class="t" style="left:1561px;top:805.80px;font-size:15px;font-weight:400;color:#212529;">0x0</span><span class="t" style="left:1837px;top:805.80px;font-size:15px;font-weight:400;color:#212529;letter-spacing:0.4px">0xffffde8ceab2be00</span><span class="t" style="left:2005px;top:805.80px;font-size:15px;font-weight:400;color:#212529;">0</span><div class="r" style="left:520px;top:857px;width:1617px;height:1px;background:#d5dce3"></div><svg class="r" style="left:520px;top:841px;" width="7" height="8" viewBox="0 0 7 8"><path d="M0.5 0.8 L6 4 L0.5 7.2" fill="none" stroke="#495057" stroke-width="1.1"/></svg><span class="t" style="left:546px;top:833.80px;font-size:15px;font-weight:400;color:#212529;">Win11Dump\forensic\csv\devices.csv</span><span class="t" style="left:846px;top:833.80px;font-size:15px;font-weight:400;color:#212529;">ReqQueue</span><span class="t" style="left:1045px;top:833.80px;font-size:15px;font-weight:400;color:#212529;">HTTP</span><span class="t" style="left:1177px;top:833.80px;font-size:15px;font-weight:400;color:#212529;">\Driver\HTTP</span><span class="t" style="left:1309px;top:833.80px;font-size:15px;font-weight:400;color:#212529;letter-spacing:0.4px">0xffffde8cead55850</span><span class="t" style="left:1561px;top:833.80px;font-size:15px;font-weight:400;color:#212529;">0x0</span><span class="t" style="left:1837px;top:833.80px;font-size:15px;font-weight:400;color:#212529;letter-spacing:0.4px">0xffffde8ceab28e00</span><span class="t" style="left:2005px;top:833.80px;font-size:15px;font-weight:400;color:#212529;">0</span><div class="r" style="left:520px;top:885px;width:1617px;height:1px;background:#d5dce3"></div><svg class="r" style="left:520px;top:869px;" width="7" height="8" viewBox="0 0 7 8"><path d="M0.5 0.8 L6 4 L0.5 7.2" fill="none" stroke="#495057" stroke-width="1.1"/></svg><span class="t" style="left:546px;top:861.80px;font-size:15px;font-weight:400;color:#212529;">Win11Dump\forensic\csv\devices.csv</span><span class="t" style="left:846px;top:861.80px;font-size:15px;font-weight:400;color:#212529;">ClientSession</span><span class="t" style="left:1045px;top:861.80px;font-size:15px;font-weight:400;color:#212529;">HTTP</span><span class="t" style="left:1177px;top:861.80px;font-size:15px;font-weight:400;color:#212529;">\Driver\HTTP</span><span class="t" style="left:1309px;top:861.80px;font-size:15px;font-weight:400;color:#212529;letter-spacing:0.4px">0xffffde8cead55850</span><span class="t" style="left:1561px;top:861.80px;font-size:15px;font-weight:400;color:#212529;">0x0</span><span class="t" style="left:1837px;top:861.80px;font-size:15px;font-weight:400;color:#212529;letter-spacing:0.4px">0xffffde8ceab27e00</span><span class="t" style="left:2005px;top:861.80px;font-size:15px;font-weight:400;color:#212529;">0</span><div class="r" style="left:520px;top:913px;width:1617px;height:1px;background:#d5dce3"></div><svg class="r" style="left:520px;top:897px;" width="7" height="8" viewBox="0 0 7 8"><path d="M0.5 0.8 L6 4 L0.5 7.2" fill="none" stroke="#495057" stroke-width="1.1"/></svg><span class="t" style="left:546px;top:889.80px;font-size:15px;font-weight:400;color:#212529;">Win11Dump\forensic\csv\devices.csv</span><span class="t" style="left:846px;top:889.80px;font-size:15px;font-weight:400;color:#212529;">00000026</span><span class="t" style="left:1045px;top:889.80px;font-size:15px;font-weight:400;color:#212529;">SoftwareDevice</span><span class="t" style="left:1177px;top:889.80px;font-size:15px;font-weight:400;color:#212529;">\Driver\Softwar...</span><span class="t" style="left:1309px;top:889.80px;font-size:15px;font-weight:400;color:#212529;letter-spacing:0.4px">0xffffde8ce58e3e30</span><span class="t" style="left:1561px;top:889.80px;font-size:15px;font-weight:400;color:#212529;">0x0</span><span class="t" style="left:1837px;top:889.80px;font-size:15px;font-weight:400;color:#212529;letter-spacing:0.4px">0xffffde8ceaacde00</span><span class="t" style="left:2005px;top:889.80px;font-size:15px;font-weight:400;color:#212529;">0</span><div class="r" style="left:520px;top:941px;width:1617px;height:1px;background:#d5dce3"></div><svg class="r" style="left:520px;top:925px;" width="7" height="8" viewBox="0 0 7 8"><path d="M0.5 0.8 L6 4 L0.5 7.2" fill="none" stroke="#495057" stroke-width="1.1"/></svg><span class="t" style="left:546px;top:917.80px;font-size:15px;font-weight:400;color:#212529;">Win11Dump\forensic\csv\devices.csv</span><span class="t" style="left:846px;top:917.80px;font-size:15px;font-weight:400;color:#212529;">LanmanDatagramReceiver</span><span class="t" style="left:1045px;top:917.80px;font-size:15px;font-weight:400;color:#212529;">bowser</span><span class="t" style="left:1177px;top:917.80px;font-size:15px;font-weight:400;color:#212529;">\FileSystem\bo...</span><span class="t" style="left:1309px;top:917.80px;font-size:15px;font-weight:400;color:#212529;letter-spacing:0.4px">0xffffde8ceaf2ae00</span><span class="t" style="left:1561px;top:917.80px;font-size:15px;font-weight:400;color:#212529;">0x0</span><span class="t" style="left:1837px;top:917.80px;font-size:15px;font-weight:400;color:#212529;letter-spacing:0.4px">0xffffde8ceaabbe00</span><span class="t" style="left:2005px;top:917.80px;font-size:15px;font-weight:400;color:#212529;">0</span><div class="r" style="left:520px;top:969px;width:1617px;height:1px;background:#d5dce3"></div><svg class="r" style="left:520px;top:953px;" width="7" height="8" viewBox="0 0 7 8"><path d="M0.5 0.8 L6 4 L0.5 7.2" fill="none" stroke="#495057" stroke-width="1.1"/></svg><span class="t" style="left:546px;top:945.80px;font-size:15px;font-weight:400;color:#212529;">Win11Dump\forensic\csv\devices.csv</span><span class="t" style="left:846px;top:945.80px;font-size:15px;font-weight:400;color:#212529;">00000025</span><span class="t" style="left:1045px;top:945.80px;font-size:15px;font-weight:400;color:#212529;">SoftwareDevice</span><span class="t" style="left:1177px;top:945.80px;font-size:15px;font-weight:400;color:#212529;">\Driver\Softwar...</span><span class="t" style="left:1309px;top:945.80px;font-size:15px;font-weight:400;color:#212529;letter-spacing:0.4px">0xffffde8ce58e3e30</span><span class="t" style="left:1561px;top:945.80px;font-size:15px;font-weight:400;color:#212529;">0x0</span><span class="t" style="left:1837px;top:945.80px;font-size:15px;font-weight:400;color:#212529;letter-spacing:0.4px">0xffffde8ceaab8e00</span><span class="t" style="left:2005px;top:945.80px;font-size:15px;font-weight:400;color:#212529;">0</span><div class="r" style="left:520px;top:997px;width:1617px;height:1px;background:#d5dce3"></div><svg class="r" style="left:520px;top:981px;" width="7" height="8" viewBox="0 0 7 8"><path d="M0.5 0.8 L6 4 L0.5 7.2" fill="none" stroke="#495057" stroke-width="1.1"/></svg><span class="t" style="left:546px;top:973.80px;font-size:15px;font-weight:400;color:#212529;">Win11Dump\forensic\csv\devices.csv</span><span class="t" style="left:846px;top:973.80px;font-size:15px;font-weight:400;color:#212529;">00000024</span><span class="t" style="left:1045px;top:973.80px;font-size:15px;font-weight:400;color:#212529;">SoftwareDevice</span><span class="t" style="left:1177px;top:973.80px;font-size:15px;font-weight:400;color:#212529;">\Driver\Softwar...</span><span class="t" style="left:1309px;top:973.80px;font-size:15px;font-weight:400;color:#212529;letter-spacing:0.4px">0xffffde8ce58e3e30</span><span class="t" style="left:1561px;top:973.80px;font-size:15px;font-weight:400;color:#212529;">0x0</span><span class="t" style="left:1837px;top:973.80px;font-size:15px;font-weight:400;color:#212529;letter-spacing:0.4px">0xffffde8ceaab7e00</span><span class="t" style="left:2005px;top:973.80px;font-size:15px;font-weight:400;color:#212529;">0</span><div class="r" style="left:520px;top:1025px;width:1617px;height:1px;background:#d5dce3"></div><svg class="r" style="left:520px;top:1009px;" width="7" height="8" viewBox="0 0 7 8"><path d="M0.5 0.8 L6 4 L0.5 7.2" fill="none" stroke="#495057" stroke-width="1.1"/></svg><span class="t" style="left:546px;top:1001.80px;font-size:15px;font-weight:400;color:#212529;">Win11Dump\forensic\csv\devices.csv</span><span class="t" style="left:846px;top:1001.80px;font-size:15px;font-weight:400;color:#212529;">Video0</span><span class="t" style="left:1045px;top:1001.80px;font-size:15px;font-weight:400;color:#212529;">BasicDisplay</span><span class="t" style="left:1177px;top:1001.80px;font-size:15px;font-weight:400;color:#212529;">\Driver\BasicDi...</span><span class="t" style="left:1309px;top:1001.80px;font-size:15px;font-weight:400;color:#212529;letter-spacing:0.4px">0xffffde8ce76e3e30</span><span class="t" style="left:1561px;top:1001.80px;font-size:15px;font-weight:400;color:#212529;">0x0</span><span class="t" style="left:1837px;top:1001.80px;font-size:15px;font-weight:400;color:#212529;letter-spacing:0.4px">0xffffde8ce9c64710</span><span class="t" style="left:2005px;top:1001.80px;font-size:15px;font-weight:400;color:#212529;">0</span><div class="r" style="left:520px;top:1053px;width:1617px;height:1px;background:#d5dce3"></div><svg class="r" style="left:520px;top:1037px;" width="7" height="8" viewBox="0 0 7 8"><path d="M0.5 0.8 L6 4 L0.5 7.2" fill="none" stroke="#495057" stroke-width="1.1"/></svg><span class="t" style="left:546px;top:1029.80px;font-size:15px;font-weight:400;color:#212529;">Win11Dump\forensic\csv\devices.csv</span><span class="t" style="left:1045px;top:1029.80px;font-size:15px;font-weight:400;color:#212529;">Ntfs</span><span class="t" style="left:1177px;top:1029.80px;font-size:15px;font-weight:400;color:#212529;">\FileSystem\Ntfs</span><span class="t" style="left:1309px;top:1029.80px;font-size:15px;font-weight:400;color:#212529;letter-spacing:0.4px">0xffffde8ce71efd60</span><span class="t" style="left:1561px;top:1029.80px;font-size:15px;font-weight:400;color:#212529;letter-spacing:0.4px">0xffffde8ce9baeb70</span><span class="t" style="left:1837px;top:1029.80px;font-size:15px;font-weight:400;color:#212529;letter-spacing:0.4px">0xffffde8ce9bb0030</span><span class="t" style="left:2005px;top:1029.80px;font-size:15px;font-weight:400;color:#212529;">1</span><div class="r" style="left:520px;top:1081px;width:1617px;height:1px;background:#d5dce3"></div><svg class="r" style="left:520px;top:1065px;" width="7" height="8" viewBox="0 0 7 8"><path d="M0.5 0.8 L6 4 L0.5 7.2" fill="none" stroke="#495057" stroke-width="1.1"/></svg><span class="t" style="left:546px;top:1057.80px;font-size:15px;font-weight:400;color:#212529;">Win11Dump\forensic\csv\devices.csv</span><span class="t" style="left:1045px;top:1057.80px;font-size:15px;font-weight:400;color:#212529;">FltMgr</span><span class="t" style="left:1177px;top:1057.80px;font-size:15px;font-weight:400;color:#212529;">\FileSystem\Flt...</span><span class="t" style="left:1309px;top:1057.80px;font-size:15px;font-weight:400;color:#212529;letter-spacing:0.4px">0xffffde8ce59b4070</span><span class="t" style="left:1561px;top:1057.80px;font-size:15px;font-weight:400;color:#212529;">0x0</span><span class="t" style="left:1837px;top:1057.80px;font-size:15px;font-weight:400;color:#212529;letter-spacing:0.4px">0xffffde8ce9baeb70</span><span class="t" style="left:2005px;top:1057.80px;font-size:15px;font-weight:400;color:#212529;">0</span><div class="r" style="left:520px;top:1109px;width:1617px;height:1px;background:#d5dce3"></div><svg class="r" style="left:520px;top:1093px;" width="7" height="8" viewBox="0 0 7 8"><path d="M0.5 0.8 L6 4 L0.5 7.2" fill="none" stroke="#495057" stroke-width="1.1"/></svg><span class="t" style="left:546px;top:1085.80px;font-size:15px;font-weight:400;color:#212529;">Win11Dump\forensic\csv\devices.csv</span><span class="t" style="left:846px;top:1085.80px;font-size:15px;font-weight:400;color:#212529;">00000022</span><span class="t" style="left:1045px;top:1085.80px;font-size:15px;font-weight:400;color:#212529;">BasicDisplay</span><span class="t" style="left:1177px;top:1085.80px;font-size:15px;font-weight:400;color:#212529;">\Driver\BasicDi...</span><span class="t" style="left:1309px;top:1085.80px;font-size:15px;font-weight:400;color:#212529;letter-spacing:0.4px">0xffffde8ce76e3e30</span><span class="t" style="left:1561px;top:1085.80px;font-size:15px;font-weight:400;color:#212529;letter-spacing:0.4px">0xffffde8ce9279de0</span><span class="t" style="left:1837px;top:1085.80px;font-size:15px;font-weight:400;color:#212529;letter-spacing:0.4px">0xffffde8ce9c64080</span><span class="t" style="left:2005px;top:1085.80px;font-size:15px;font-weight:400;color:#212529;">1</span><div class="r" style="left:520px;top:1137px;width:1617px;height:1px;background:#d5dce3"></div><svg class="r" style="left:520px;top:1121px;" width="7" height="8" viewBox="0 0 7 8"><path d="M0.5 0.8 L6 4 L0.5 7.2" fill="none" stroke="#495057" stroke-width="1.1"/></svg><span class="t" style="left:546px;top:1113.80px;font-size:15px;font-weight:400;color:#212529;">Win11Dump\forensic\csv\devices.csv</span><span class="t" style="left:1045px;top:1113.80px;font-size:15px;font-weight:400;color:#212529;">monitor</span><span class="t" style="left:1177px;top:1113.80px;font-size:15px;font-weight:400;color:#212529;">\Driver\monitor</span><span class="t" style="left:1309px;top:1113.80px;font-size:15px;font-weight:400;color:#212529;letter-spacing:0.4px">0xffffde8ce9277e10</span><span class="t" style="left:1561px;top:1113.80px;font-size:15px;font-weight:400;color:#212529;">0x0</span><span class="t" style="left:1837px;top:1113.80px;font-size:15px;font-weight:400;color:#212529;letter-spacing:0.4px">0xffffde8ce9279de0</span><span class="t" style="left:2005px;top:1113.80px;font-size:15px;font-weight:400;color:#212529;">0</span><div class="r" style="left:520px;top:1165px;width:1617px;height:1px;background:#d5dce3"></div><svg class="r" style="left:520px;top:1149px;" width="7" height="8" viewBox="0 0 7 8"><path d="M0.5 0.8 L6 4 L0.5 7.2" fill="none" stroke="#495057" stroke-width="1.1"/></svg><span class="t" style="left:546px;top:1141.80px;font-size:15px;font-weight:400;color:#212529;">Win11Dump\forensic\csv\devices.csv</span><span class="t" style="left:846px;top:1141.80px;font-size:15px;font-weight:400;color:#212529;">Video1</span><span class="t" style="left:1045px;top:1141.80px;font-size:15px;font-weight:400;color:#212529;">BasicDisplay</span><span class="t" style="left:1177px;top:1141.80px;font-size:15px;font-weight:400;color:#212529;">\Driver\BasicDi...</span><span class="t" style="left:1309px;top:1141.80px;font-size:15px;font-weight:400;color:#212529;letter-spacing:0.4px">0xffffde8ce76e3e30</span><span class="t" style="left:1561px;top:1141.80px;font-size:15px;font-weight:400;color:#212529;">0x0</span><span class="t" style="left:1837px;top:1141.80px;font-size:15px;font-weight:400;color:#212529;letter-spacing:0.4px">0xffffde8ce9277b10</span><span class="t" style="left:2005px;top:1141.80px;font-size:15px;font-weight:400;color:#212529;">0</span><div class="r" style="left:520px;top:1193px;width:1617px;height:1px;background:#d5dce3"></div><svg class="r" style="left:520px;top:1177px;" width="7" height="8" viewBox="0 0 7 8"><path d="M0.5 0.8 L6 4 L0.5 7.2" fill="none" stroke="#495057" stroke-width="1.1"/></svg><span class="t" style="left:546px;top:1169.80px;font-size:15px;font-weight:400;color:#212529;">Win11Dump\forensic\csv\devices.csv</span><span class="t" style="left:846px;top:1169.80px;font-size:15px;font-weight:400;color:#212529;">UdfsCdRom</span><span class="t" style="left:1045px;top:1169.80px;font-size:15px;font-weight:400;color:#212529;">udfs</span><span class="t" style="left:1177px;top:1169.80px;font-size:15px;font-weight:400;color:#212529;">\FileSystem\udfs</span><span class="t" style="left:1309px;top:1169.80px;font-size:15px;font-weight:400;color:#212529;letter-spacing:0.4px">0xffffde8ce7e63740</span><span class="t" style="left:1561px;top:1169.80px;font-size:15px;font-weight:400;color:#212529;letter-spacing:0.4px">0xffffde8ce7f25820</span><span class="t" style="left:1837px;top:1169.80px;font-size:15px;font-weight:400;color:#212529;letter-spacing:0.4px">0xffffde8ce7f07ab0</span><span class="t" style="left:2005px;top:1169.80px;font-size:15px;font-weight:400;color:#212529;">1</span><div class="r" style="left:520px;top:1221px;width:1617px;height:1px;background:#d5dce3"></div><svg class="r" style="left:520px;top:1205px;" width="7" height="8" viewBox="0 0 7 8"><path d="M0.5 0.8 L6 4 L0.5 7.2" fill="none" stroke="#495057" stroke-width="1.1"/></svg><span class="t" style="left:546px;top:1197.80px;font-size:15px;font-weight:400;color:#212529;">Win11Dump\forensic\csv\devices.csv</span><span class="t" style="left:1045px;top:1197.80px;font-size:15px;font-weight:400;color:#212529;">FltMgr</span><span class="t" style="left:1177px;top:1197.80px;font-size:15px;font-weight:400;color:#212529;">\FileSystem\Flt...</span><span class="t" style="left:1309px;top:1197.80px;font-size:15px;font-weight:400;color:#212529;letter-spacing:0.4px">0xffffde8ce59b4070</span><span class="t" style="left:1561px;top:1197.80px;font-size:15px;font-weight:400;color:#212529;">0x0</span><span class="t" style="left:1837px;top:1197.80px;font-size:15px;font-weight:400;color:#212529;letter-spacing:0.4px">0xffffde8ce7f25820</span><span class="t" style="left:2005px;top:1197.80px;font-size:15px;font-weight:400;color:#212529;">0</span><div class="r" style="left:520px;top:1249px;width:1617px;height:1px;background:#d5dce3"></div><svg class="r" style="left:520px;top:1233px;" width="7" height="8" viewBox="0 0 7 8"><path d="M0.5 0.8 L6 4 L0.5 7.2" fill="none" stroke="#495057" stroke-width="1.1"/></svg><span class="t" style="left:546px;top:1225.80px;font-size:15px;font-weight:400;color:#212529;">Win11Dump\forensic\csv\devices.csv</span><span class="t" style="left:846px;top:1225.80px;font-size:15px;font-weight:400;color:#212529;">USBPDO-1</span><span class="t" style="left:1045px;top:1225.80px;font-size:15px;font-weight:400;color:#212529;">USBHUB3</span><span class="t" style="left:1177px;top:1225.80px;font-size:15px;font-weight:400;color:#212529;">\Driver\USBHUB3</span><span class="t" style="left:1309px;top:1225.80px;font-size:15px;font-weight:400;color:#212529;letter-spacing:0.4px">0xffffde8ce7e51060</span><span class="t" style="left:1561px;top:1225.80px;font-size:15px;font-weight:400;color:#212529;letter-spacing:0.4px">0xffffde8ce7ee6470</span><span class="t" style="left:1837px;top:1225.80px;font-size:15px;font-weight:400;color:#212529;letter-spacing:0.4px">0xffffde8ce7e67d40</span><span class="t" style="left:2005px;top:1225.80px;font-size:15px;font-weight:400;color:#212529;">1</span><div class="r" style="left:520px;top:1277px;width:1617px;height:1px;background:#d5dce3"></div><svg class="r" style="left:520px;top:1261px;" width="7" height="8" viewBox="0 0 7 8"><path d="M0.5 0.8 L6 4 L0.5 7.2" fill="none" stroke="#495057" stroke-width="1.1"/></svg><span class="t" style="left:546px;top:1253.80px;font-size:15px;font-weight:400;color:#212529;">Win11Dump\forensic\csv\devices.csv</span><span class="t" style="left:846px;top:1253.80px;font-size:15px;font-weight:400;color:#212529;">_HID00000000</span><span class="t" style="left:1045px;top:1253.80px;font-size:15px;font-weight:400;color:#212529;">HidUsb</span><span class="t" style="left:1177px;top:1253.80px;font-size:15px;font-weight:400;color:#212529;">\Driver\HidUsb</span><span class="t" style="left:1309px;top:1253.80px;font-size:15px;font-weight:400;color:#212529;letter-spacing:0.4px">0xffffde8ce7e819f0</span><span class="t" style="left:1561px;top:1253.80px;font-size:15px;font-weight:400;color:#212529;">0x0</span><span class="t" style="left:1837px;top:1253.80px;font-size:15px;font-weight:400;color:#212529;letter-spacing:0.4px">0xffffde8ce7ee6470</span><span class="t" style="left:2005px;top:1253.80px;font-size:15px;font-weight:400;color:#212529;">0</span><div class="r" style="left:520px;top:1305px;width:1617px;height:1px;background:#d5dce3"></div><svg class="r" style="left:520px;top:1289px;" width="7" height="8" viewBox="0 0 7 8"><path d="M0.5 0.8 L6 4 L0.5 7.2" fill="none" stroke="#495057" stroke-width="1.1"/></svg><span class="t" style="left:546px;top:1281.80px;font-size:15px;font-weight:400;color:#212529;">Win11Dump\forensic\csv\devices.csv</span><span class="t" style="left:846px;top:1281.80px;font-size:15px;font-weight:400;color:#212529;">00000021</span><span class="t" style="left:1045px;top:1281.80px;font-size:15px;font-weight:400;color:#212529;">HidUsb</span><span class="t" style="left:1177px;top:1281.80px;font-size:15px;font-weight:400;color:#212529;">\Driver\HidUsb</span><span class="t" style="left:1309px;top:1281.80px;font-size:15px;font-weight:400;color:#212529;letter-spacing:0.4px">0xffffde8ce7e819f0</span><span class="t" style="left:1561px;top:1281.80px;font-size:15px;font-weight:400;color:#212529;letter-spacing:0.4px">0xffffde8ce7e88040</span><span class="t" style="left:1837px;top:1281.80px;font-size:15px;font-weight:400;color:#212529;letter-spacing:0.4px">0xffffde8ce7fbc120</span><span class="t" style="left:2005px;top:1281.80px;font-size:15px;font-weight:400;color:#212529;">2</span><div class="r" style="left:2137px;top:270px;width:8px;height:1041px;background:#eeeeee"></div><div class="r" style="left:2137px;top:280px;width:8px;height:380px;background:#a9adb1;border-radius:4px"></div><div class="r" style="left:520px;top:1311px;width:1617px;height:8px;background:#eeeeee"></div><div class="r" style="left:822px;top:1311px;width:1273px;height:8px;background:#a9adb1;border-radius:4px"></div><div class="r" style="left:2137px;top:1311px;width:8px;height:8px;background:#e9ecef"></div><div class="r" style="left:519px;top:1319px;width:1627px;height:1px;background:#ced4da"></div><div class="r" style="left:2146px;top:229px;width:4px;height:1091px;background:#ececec"></div><div class="r" style="left:2146px;top:765px;width:4px;height:20px;background:#a9adb1"></div><div class="r" style="left:2150px;top:229px;width:410px;height:1091px;background:#fff"></div><svg class="r" style="left:2161px;top:292px;" width="15" height="16" viewBox="0 0 15 16"><path d="M0.9 3.1 L6.1 2.3 V7.1 H0.9 Z M7 2.1 L15 0.2 V7.1 H7 Z M0.9 8.9 H6.1 V14 L0.9 13.2 Z M7 8.9 H15 V15.9 L7 14.2 Z" fill="#1a81c4"/><rect x="0.9" y="7.1" width="14.1" height="1.8" fill="#1a81c4" opacity="0.45"/></svg><span class="t" style="left:2181px;top:289.98px;font-size:14.5px;font-weight:400;color:#212529;letter-spacing:0.2px">Windows</span><svg class="r" style="left:2252px;top:296px;" width="8" height="10" viewBox="0 0 8 10"><path d="M1.5 1 L6 5 L1.5 9" fill="none" stroke="#212529" stroke-width="1.3"/></svg><svg class="r" style="left:2273px;top:296px;" width="16" height="7" viewBox="0 0 16 7"><rect x="0" y="0.5" width="16" height="6" fill="#5bb8ea"/><path d="M2 2 H6 V5 H2 Z M7 2 H11 V5 H7 Z M12 2 H15 V5 H12 Z" fill="none" stroke="#c8e8f8" stroke-width="0.6"/></svg><span class="t" style="left:2293px;top:289.98px;font-size:14.5px;font-weight:400;color:#212529;letter-spacing:0.2px">Memory</span><svg class="r" style="left:2359px;top:296px;" width="8" height="10" viewBox="0 0 8 10"><path d="M1.5 1 L6 5 L1.5 9" fill="none" stroke="#212529" stroke-width="1.3"/></svg><svg class="r" style="left:2380px;top:292px;" width="15" height="17" viewBox="0 0 15 17"><path d="M5.2 0.8 H14.2 V16.2 H0.8 V5.2 Z" fill="none" stroke="#111" stroke-width="1.5" stroke-linejoin="round"/><path d="M5.2 0.8 V5.2 H0.8" fill="none" stroke="#111" stroke-width="0.9"/><circle cx="7.6" cy="10.4" r="2.2" fill="none" stroke="#111" stroke-width="1.7"/><path d="M10.00 10.40 L11.30 10.40 M9.30 12.10 L10.22 13.02 M7.60 12.80 L7.60 14.10 M5.90 12.10 L4.98 13.02 M5.20 10.40 L3.90 10.40 M5.90 8.70 L4.98 7.78 M7.60 8.00 L7.60 6.70 M9.30 8.70 L10.22 7.78" stroke="#111" stroke-width="1.5"/></svg><span class="t" style="left:2401px;top:289.98px;font-size:14.5px;font-weight:400;color:#212529;letter-spacing:0.2px">Devices</span><div class="r" style="left:2160px;top:317px;width:385px;height:792px;border:1px solid #d5dce3;border-radius:5px;box-sizing:border-box"></div><span class="t" style="left:2170px;top:321.63px;font-size:15.5px;font-weight:400;color:#343a40;letter-spacing:0.5px">Artifact Fields</span><div class="r" style="left:2171px;top:356px;width:363px;height:747px;border:1px solid #d5dce3;box-sizing:border-box"></div><div class="r" style="left:2172px;top:357px;width:361px;height:33px;background:#f6f7f9"></div><div class="r" style="left:2172px;top:390px;width:361px;height:1px;background:#d5dce3"></div><div class="r" style="left:2351px;top:357px;width:1px;height:33px;background:#d5dce3"></div><span class="t" style="left:2180px;top:363.98px;font-size:14.5px;font-weight:700;color:#212529;-webkit-text-stroke:0;">Field</span><span class="t" style="left:2359px;top:363.98px;font-size:14.5px;font-weight:700;color:#212529;-webkit-text-stroke:0;">Value</span><div class="r" style="left:2172px;top:418px;width:361px;height:1px;background:#d5dce3"></div><svg class="r" style="left:2181px;top:397px;" width="15" height="16" viewBox="0 0 15 16"><rect x="0.8" y="2.2" width="13.4" height="12.8" rx="1.5" fill="none" stroke="#1565d8" stroke-width="1.5"/><path d="M0.8 5.8 H14.2" stroke="#1565d8" stroke-width="1.5"/><path d="M4 0.5 V3 M11 0.5 V3" stroke="#1565d8" stroke-width="1.5"/><rect x="8" y="8.5" width="3.5" height="3.5" fill="#1565d8"/></svg><span class="t" style="left:2201px;top:394.98px;font-size:14.5px;font-weight:400;color:#212529;letter-spacing:0.2px">Entry Date</span><span class="t" style="left:2359px;top:394.98px;font-size:14.5px;font-weight:400;color:#212529;letter-spacing:0.2px">&lt;Timeless Entry&gt;</span><div class="r" style="left:2172px;top:446px;width:361px;height:1px;background:#d5dce3"></div><svg class="r" style="left:2180px;top:427px;" width="16" height="13" viewBox="0 0 16 13"><circle cx="2.3" cy="4.3" r="1.4" fill="#1565d8"/><circle cx="2.3" cy="9.9" r="1.4" fill="#1565d8"/><path d="M5.2 12.3 L8.4 0.8 H11 L7.8 12.3 Z M9.8 12.3 L13 0.8 H15.6 L12.4 12.3 Z" fill="#1565d8"/></svg><svg class="r" style="left:2264px;top:427px;" width="11" height="14" viewBox="0 0 11 14"><path d="M3.8 0.3 H7.2 V5 H10.3 L5.5 9.6 L0.7 5 H3.8 Z" fill="#1565d8"/><path d="M0.3 12 H10.7" stroke="#1565d8" stroke-width="1.4"/></svg><span class="t" style="left:2201px;top:422.98px;font-size:14.5px;font-weight:400;color:#212529;letter-spacing:0.2px">Source</span><span class="t" style="left:2359px;top:422.98px;font-size:14.5px;font-weight:400;color:#0b5ed7;text-decoration:underline">Win11Dump\forensic\c...</span><div class="r" style="left:2172px;top:474px;width:361px;height:1px;background:#d5dce3"></div><span class="t" style="left:2182px;top:451.02px;font-size:11.5px;font-weight:400;color:#1565d8;-webkit-text-stroke:0.4px #1565d8">ab</span><span class="t" style="left:2201px;top:450.98px;font-size:14.5px;font-weight:400;color:#212529;letter-spacing:0.2px">Attached Device A...</span><span class="t" style="left:2359px;top:450.98px;font-size:14.5px;font-weight:400;color:#212529;letter-spacing:0.2px">0x0</span><div class="r" style="left:2172px;top:502px;width:361px;height:1px;background:#d5dce3"></div><span class="t" style="left:2180px;top:479.53px;font-size:10px;font-weight:700;color:#1565d8;-webkit-text-stroke:0;letter-spacing:-0.5px">123</span><span class="t" style="left:2201px;top:478.98px;font-size:14.5px;font-weight:400;color:#212529;letter-spacing:0.2px">Depth</span><span class="t" style="left:2359px;top:478.98px;font-size:14.5px;font-weight:400;color:#212529;letter-spacing:0.2px">0</span><div class="r" style="left:2172px;top:530px;width:361px;height:1px;background:#d5dce3"></div><span class="t" style="left:2182px;top:507.02px;font-size:11.5px;font-weight:400;color:#1565d8;-webkit-text-stroke:0.4px #1565d8">ab</span><span class="t" style="left:2201px;top:506.98px;font-size:14.5px;font-weight:400;color:#212529;letter-spacing:0.2px">Extra Info</span><div class="r" style="left:2172px;top:558px;width:361px;height:1px;background:#d5dce3"></div><span class="t" style="left:2182px;top:535.02px;font-size:11.5px;font-weight:400;color:#1565d8;-webkit-text-stroke:0.4px #1565d8">ab</span><span class="t" style="left:2201px;top:534.98px;font-size:14.5px;font-weight:400;color:#212529;letter-spacing:0.2px">Driver Name</span><span class="t" style="left:2359px;top:534.98px;font-size:14.5px;font-weight:400;color:#212529;letter-spacing:0.2px">DirectIO</span><div class="r" style="left:2172px;top:586px;width:361px;height:1px;background:#d5dce3"></div><span class="t" style="left:2182px;top:563.02px;font-size:11.5px;font-weight:400;color:#1565d8;-webkit-text-stroke:0.4px #1565d8">ab</span><span class="t" style="left:2201px;top:562.98px;font-size:14.5px;font-weight:400;color:#212529;letter-spacing:0.2px">Driver Object Addr...</span><span class="t" style="left:2359px;top:562.98px;font-size:14.5px;font-weight:400;color:#212529;letter-spacing:0.45px">0xffffde8cebea5e50</span><div class="r" style="left:2172px;top:614px;width:361px;height:1px;background:#d5dce3"></div><span class="t" style="left:2182px;top:591.02px;font-size:11.5px;font-weight:400;color:#1565d8;-webkit-text-stroke:0.4px #1565d8">ab</span><span class="t" style="left:2201px;top:590.98px;font-size:14.5px;font-weight:400;color:#212529;letter-spacing:0.2px">Driver Path</span><span class="t" style="left:2359px;top:590.98px;font-size:14.5px;font-weight:400;color:#212529;letter-spacing:0.2px">\Driver\DirectIO</span><div class="r" style="left:2172px;top:642px;width:361px;height:1px;background:#d5dce3"></div><span class="t" style="left:2182px;top:619.02px;font-size:11.5px;font-weight:400;color:#1565d8;-webkit-text-stroke:0.4px #1565d8">ab</span><span class="t" style="left:2201px;top:618.98px;font-size:14.5px;font-weight:400;color:#212529;letter-spacing:0.2px">Name</span><span class="t" style="left:2359px;top:618.98px;font-size:14.5px;font-weight:400;color:#212529;letter-spacing:0.2px">DirectIO</span><div class="r" style="left:2172px;top:670px;width:361px;height:1px;background:#d5dce3"></div><span class="t" style="left:2182px;top:647.02px;font-size:11.5px;font-weight:400;color:#1565d8;-webkit-text-stroke:0.4px #1565d8">ab</span><span class="t" style="left:2201px;top:646.98px;font-size:14.5px;font-weight:400;color:#212529;letter-spacing:0.2px">Object Address</span><span class="t" style="left:2359px;top:646.98px;font-size:14.5px;font-weight:400;color:#212529;letter-spacing:0.45px">0xffffde8cebca5e10</span><div class="r" style="left:2160px;top:1108px;width:385px;height:6px;background:#ececec"></div><div class="r" style="left:2343px;top:1109px;width:20px;height:4px;background:#a9adb1"></div><div class="r" style="left:2160px;top:1113px;width:385px;height:197px;border:1px solid #d5dce3;border-radius:5px;box-sizing:border-box;background:#fff"></div><span class="t" style="left:2170px;top:1117.63px;font-size:15.5px;font-weight:400;color:#343a40;letter-spacing:0.4px">Field Contents</span><div class="r" style="left:2171px;top:1152px;width:363px;height:152px;border:1px solid #d5dce3;border-radius:4px;box-sizing:border-box;background:#f6f7f9"></div><div class="r" style="left:519px;top:1320px;width:2036px;height:41px;background:#f6f7f9"></div><div class="r" style="left:37px;top:1361px;width:2518px;height:1px;background:#ced4da"></div><div class="r" style="left:0px;top:1362px;width:2560px;height:30px;background:#f6f7f9;border:1px solid #d2d2d2;box-sizing:border-box"></div><svg class="r" style="left:1351px;top:1335px;" width="12" height="11" viewBox="0 0 12 11"><path d="M5.5 1 L1.5 5.5 L5.5 10 M10.5 1 L6.5 5.5 L10.5 10" fill="none" stroke="#adb5bd" stroke-width="1.3"/></svg><svg class="r" style="left:1398px;top:1335px;" width="8" height="11" viewBox="0 0 8 11"><path d="M6.5 1 L2 5.5 L6.5 10" fill="none" stroke="#adb5bd" stroke-width="1.3"/></svg><div class="r" style="left:1428px;top:1324px;width:179px;height:34px;border:1px solid #d5dce3;border-radius:5px;box-sizing:border-box;background:#f6f7f9"></div><div class="r" style="left:1429px;top:1325px;width:74px;height:32px;background:#fff;border-radius:4px 0 0 4px"></div><div class="r" style="left:1503px;top:1325px;width:1px;height:32px;background:#d5dce3"></div><div class="r" style="left:1532px;top:1325px;width:1px;height:32px;background:#ced4da"></div><span class="t" style="left:1441px;top:1330.98px;font-size:14.5px;font-weight:400;color:#212529;">1</span><span class="t" style="left:1515px;top:1330.98px;font-size:14.5px;font-weight:400;color:#212529;">/</span><span class="t" style="left:1545px;top:1330.98px;font-size:14.5px;font-weight:400;color:#212529;">3</span><svg class="r" style="left:1627px;top:1335px;" width="8" height="11" viewBox="0 0 8 11"><path d="M1.5 1 L6 5.5 L1.5 10" fill="none" stroke="#212529" stroke-width="1.6"/></svg><svg class="r" style="left:1672px;top:1335px;" width="12" height="11" viewBox="0 0 12 11"><path d="M1.5 1 L5.5 5.5 L1.5 10 M6.5 1 L10.5 5.5 L6.5 10" fill="none" stroke="#212529" stroke-width="1.6"/></svg><div class="r" style="left:2411px;top:1324px;width:140px;height:34px;border:1px solid #d5dce3;border-radius:5px;box-sizing:border-box;background:#f6f7f9"></div><div class="r" style="left:2439px;top:1325px;width:84px;height:32px;background:#fff"></div><div class="r" style="left:2419px;top:1340px;width:11px;height:2px;background:#212529"></div><span class="t" style="left:2469px;top:1330.98px;font-size:14.5px;font-weight:400;color:#212529;">100</span><div class="r" style="left:2530px;top:1340px;width:12px;height:2px;background:#212529"></div><div class="r" style="left:2535px;top:1335px;width:2px;height:12px;background:#212529"></div></div></body></html>
